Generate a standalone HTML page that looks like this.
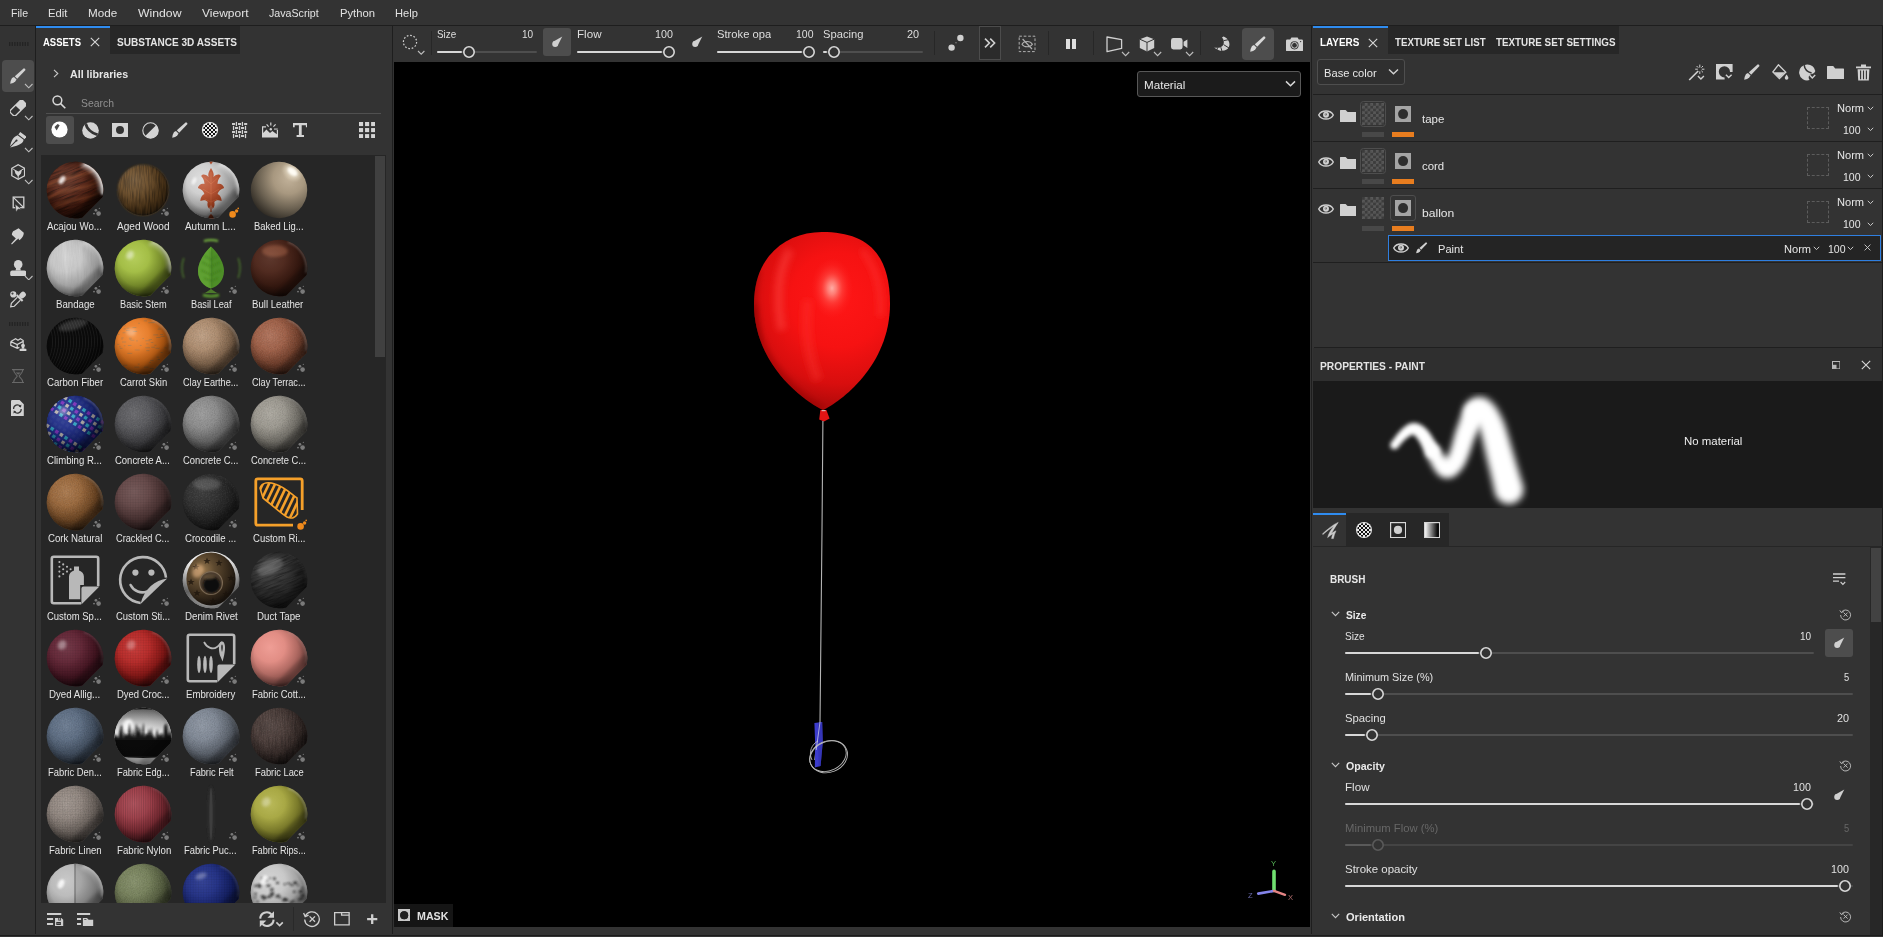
<!DOCTYPE html>
<html><head><meta charset="utf-8"><title>Substance 3D Painter</title>
<style>
html,body{margin:0;padding:0;background:#333;overflow:hidden}
body{width:1883px;height:937px;position:relative;font-family:"Liberation Sans",sans-serif}
.b{position:absolute;display:block}
.t{position:absolute;white-space:pre;transform-origin:0 50%;display:block}
</style></head><body>
<div class="b" style="left:0px;top:0px;width:1883px;height:25px;background:#333333;"></div>
<div class="b" style="left:0px;top:25px;width:1883px;height:1px;background:#1e1e1e;"></div>
<span class="t" style="left:10.50px;top:8.00px;font-size:11px;line-height:11px;color:#e2e2e2;transform:scaleX(0.9651);">File</span>
<span class="t" style="left:48.40px;top:8.00px;font-size:11px;line-height:11px;color:#e2e2e2;transform:scaleX(1.0227);">Edit</span>
<span class="t" style="left:88.30px;top:8.00px;font-size:11px;line-height:11px;color:#e2e2e2;transform:scaleX(1.0606);">Mode</span>
<span class="t" style="left:138.30px;top:8.00px;font-size:11px;line-height:11px;color:#e2e2e2;transform:scaleX(1.1118);">Window</span>
<span class="t" style="left:202.30px;top:8.00px;font-size:11px;line-height:11px;color:#e2e2e2;transform:scaleX(1.0913);">Viewport</span>
<span class="t" style="left:269.20px;top:8.00px;font-size:11px;line-height:11px;color:#e2e2e2;transform:scaleX(0.9674);">JavaScript</span>
<span class="t" style="left:339.50px;top:8.00px;font-size:11px;line-height:11px;color:#e2e2e2;transform:scaleX(1.0210);">Python</span>
<span class="t" style="left:395.30px;top:8.00px;font-size:11px;line-height:11px;color:#e2e2e2;transform:scaleX(1.0122);">Help</span>
<div class="b" style="left:35px;top:26px;width:1.3px;height:908px;background:#1e1e1e;"></div>
<div class="b" style="left:392px;top:26px;width:1.3px;height:908px;background:#1e1e1e;"></div>
<div class="b" style="left:1311px;top:26px;width:1.2px;height:908px;background:#1e1e1e;"></div>
<div class="b" style="left:0px;top:935px;width:1883px;height:1px;background:#1c1c1c;"></div>
<div class="b" style="left:1882px;top:26px;width:1px;height:909px;background:#1c1c1c;"></div>
<svg class="b" style="left:8.5px;top:42.3px;" width="21" height="4" viewBox="0 0 21 4"><rect x="0.0" y="0" width="1.3" height="4" fill="#232323"/><rect x="2.6" y="0" width="1.3" height="4" fill="#232323"/><rect x="5.2" y="0" width="1.3" height="4" fill="#232323"/><rect x="7.8" y="0" width="1.3" height="4" fill="#232323"/><rect x="10.4" y="0" width="1.3" height="4" fill="#232323"/><rect x="13.0" y="0" width="1.3" height="4" fill="#232323"/><rect x="15.6" y="0" width="1.3" height="4" fill="#232323"/><rect x="18.2" y="0" width="1.3" height="4" fill="#232323"/></svg>
<svg class="b" style="left:8.5px;top:322.2px;" width="21" height="4" viewBox="0 0 21 4"><rect x="0.0" y="0" width="1.3" height="4" fill="#232323"/><rect x="2.6" y="0" width="1.3" height="4" fill="#232323"/><rect x="5.2" y="0" width="1.3" height="4" fill="#232323"/><rect x="7.8" y="0" width="1.3" height="4" fill="#232323"/><rect x="10.4" y="0" width="1.3" height="4" fill="#232323"/><rect x="13.0" y="0" width="1.3" height="4" fill="#232323"/><rect x="15.6" y="0" width="1.3" height="4" fill="#232323"/><rect x="18.2" y="0" width="1.3" height="4" fill="#232323"/></svg>
<div class="b" style="left:2px;top:60px;width:32px;height:32px;background:#4d4d4d;border-radius:4px;"></div>
<svg class="b" style="left:10.3px;top:68.3px;overflow:visible;" width="16.0" height="16.0" viewBox="0 0 16 16"><path d="M0.18 15.69 Q3.51 15.39 5.27 13.47 L6.54 11.47 L4.03 8.89 L2.00 10.09 Q0.44 12.79 0.18 15.69 Z" fill="#d2d2d2"/><path d="M7.19 10.70 L15.53 1.92 Q15.34 0.44 13.86 0.20 L4.82 8.26 Z" fill="#d2d2d2"/></svg>
<svg class="b" style="left:24px;top:83.0px;" width="9.5" height="5.8" viewBox="0 0 9.5 5.8"><path d="M1 1 L4.75 4.80 L8.5 1" fill="none" stroke="#bdbdbd" stroke-width="1.1"/></svg>
<svg class="b" style="left:10px;top:100px;" width="16" height="16" viewBox="0 0 16 16"><g transform="rotate(-45 8 8)"><rect x="-0.6" y="4.3" width="17.2" height="7.4" rx="2" fill="none" stroke="#d2d2d2" stroke-width="1.3"/><path d="M8 4.3 H14.6 A2 2 0 0 1 16.6 6.3 V9.7 A2 2 0 0 1 14.6 11.7 H8 Z" fill="#d2d2d2"/></g></svg>
<svg class="b" style="left:24px;top:114.9px;" width="9.5" height="5.8" viewBox="0 0 9.5 5.8"><path d="M1 1 L4.75 4.80 L8.5 1" fill="none" stroke="#bdbdbd" stroke-width="1.1"/></svg>
<svg class="b" style="left:9.8px;top:132px;" width="16.4" height="16.4" viewBox="0 0 16.4 16.4"><g fill="#d2d2d2"><path d="M10.2 0 L16.4 4.6 L14.6 7.2 L8.4 2.4 Z"/><path d="M7.6 3.2 L13.6 7.8 C13 11 11 13 0.2 15.6 L6.2 9.6 A1.1 1.1 0 1 0 5.4 8.8 L0 14.6 C1.4 7.6 3.6 4.8 7.6 3.2 Z"/></g></svg>
<svg class="b" style="left:24px;top:146.8px;" width="9.5" height="5.8" viewBox="0 0 9.5 5.8"><path d="M1 1 L4.75 4.80 L8.5 1" fill="none" stroke="#bdbdbd" stroke-width="1.1"/></svg>
<svg class="b" style="left:11px;top:164px;" width="14.4" height="16" viewBox="0 0 14.4 16"><path d="M7.2 0.7 L13.6 4.3 V11.7 L7.2 15.3 L0.8 11.7 V4.3 Z" fill="none" stroke="#d2d2d2" stroke-width="1.3"/><path d="M7.2 8 L3.4 5.8 L4.4 9.4 L7.2 12.4 L10 9.4 L11 5.8 Z" fill="#d2d2d2"/><path d="M7.2 8 V14.5 M7.2 8 L1.3 4.6 M7.2 8 L13.1 4.6" stroke="#d2d2d2" stroke-width="0.9" fill="none"/></svg>
<svg class="b" style="left:24px;top:178.8px;" width="9.5" height="5.8" viewBox="0 0 9.5 5.8"><path d="M1 1 L4.75 4.80 L8.5 1" fill="none" stroke="#bdbdbd" stroke-width="1.1"/></svg>
<svg class="b" style="left:11.5px;top:195.5px;" width="14" height="17" viewBox="0 0 14 17"><rect x="1.2" y="1.1" width="10.6" height="10.6" fill="none" stroke="#d2d2d2" stroke-width="1.3"/><path d="M1.4 1.3 L11.6 11.5" stroke="#d2d2d2" stroke-width="1.1"/><path d="M3.0 7.9 L9.6 13.2 L6.0 13.3 L4.1 16.3 Z" fill="#d2d2d2" stroke="#333" stroke-width="0.7"/></svg>
<svg class="b" style="left:11px;top:227.5px;" width="14" height="17" viewBox="0 0 14 17"><g fill="#d2d2d2"><path d="M7.6 0.3 L12.8 4.8 C12.8 7 11.6 9.6 9.6 11.2 L8.2 12.2 L7.4 10.6 L6.0 11.4 L1.0 7.0 C0.6 5.2 2.0 2.6 3.6 2.4 Z"/><path d="M5.4 9.8 L6.6 10.9 L0.9 16.6 L0.1 15.8 Z"/></g></svg>
<svg class="b" style="left:9.8px;top:259.6px;" width="16.4" height="16.6" viewBox="0 0 16.4 16.6"><g fill="#d2d2d2"><circle cx="8.2" cy="4.4" r="4.3"/><path d="M6.2 7 H10.2 L10.8 10.6 H5.6 Z"/><rect x="0.2" y="10.4" width="16" height="5.8" rx="2"/></g></svg>
<svg class="b" style="left:24px;top:274.6px;" width="9.5" height="5.8" viewBox="0 0 9.5 5.8"><path d="M1 1 L4.75 4.80 L8.5 1" fill="none" stroke="#bdbdbd" stroke-width="1.1"/></svg>
<svg class="b" style="left:9.8px;top:291.4px;overflow:visible;" width="17" height="17" viewBox="0 0 17 17"><circle cx="3.3" cy="3.4" r="3.1" fill="#d2d2d2"/><circle cx="2.5" cy="2.6" r="1.1" fill="#444"/><g transform="rotate(45 7.8 8.8)"><rect x="5.0" y="-1.4" width="5.6" height="7" rx="2.7" fill="#d2d2d2"/><rect x="3.6" y="5.2" width="8.4" height="2" fill="#d2d2d2"/><path d="M5.7 7.2 V15.8 L7.8 18.8 L9.9 15.8 V7.2" fill="none" stroke="#d2d2d2" stroke-width="1.2"/></g></svg>
<svg class="b" style="left:9.8px;top:338px;" width="17" height="13.4" viewBox="0 0 17 13.4"><g fill="none" stroke="#d2d2d2" stroke-width="1.2"><path d="M0.8 3.6 L5.6 0.8 L8 2.2 L10.4 0.8 L13.2 2.6 V6 M0.8 3.6 V7.4 L7.2 10.4 L9.4 9.4 M0.8 3.6 L7.2 6.6 L13.2 3.4 M7.2 6.6 V10.4"/></g><g fill="#d2d2d2"><circle cx="13" cy="7.6" r="1.9"/><path d="M11.8 9 H14.2 L14.4 10.8 H11.6 Z"/><rect x="9.6" y="10.8" width="6.8" height="2.4" rx="0.6"/></g></svg>
<svg class="b" style="left:11.8px;top:369px;" width="12.4" height="14.2" viewBox="0 0 12.4 14.2"><g fill="none" stroke="#686868" stroke-width="1.1"><path d="M0 0.6 H12.4 M0 13.6 H12.4 M1.6 0.6 C1.6 5 5.2 5.6 5.2 7.1 C5.2 8.6 1.6 9.2 1.6 13.6 M10.8 0.6 C10.8 5 7.2 5.6 7.2 7.1 C7.2 8.6 10.8 9.2 10.8 13.6"/></g><path d="M3.6 3.4 H8.8 L6.2 5.8 Z" fill="#686868"/></svg>
<svg class="b" style="left:10.8px;top:399.6px;" width="12.8" height="16.8" viewBox="0 0 12.8 16.8"><path d="M1.2 0 H8.6 L12.8 4.2 V15.6 A1.2 1.2 0 0 1 11.6 16.8 H1.2 A1.2 1.2 0 0 1 0 15.6 V1.2 A1.2 1.2 0 0 1 1.2 0 Z" fill="#d2d2d2"/><g fill="none" stroke="#333" stroke-width="1.2"><path d="M2.6 9 A3.8 3.8 0 0 1 9.4 6.4"/><path d="M10.2 9 A3.8 3.8 0 0 1 3.4 11.6"/></g><path d="M10.4 4.6 L10 7.6 L7.6 6.4 Z M2.4 13.4 L2.8 10.4 L5.2 11.6 Z" fill="#333"/></svg>
<div class="b" style="left:36px;top:26px;width:74px;height:2px;background:#2f8cf0;"></div>
<div class="b" style="left:110px;top:26px;width:130px;height:28px;background:#272727;"></div>
<span class="t" style="left:43.30px;top:37.00px;font-size:11px;line-height:11px;font-weight:700;color:#ffffff;transform:scaleX(0.8630);">ASSETS</span>
<svg class="b" style="left:90px;top:36.9px;" width="10" height="10" viewBox="0 0 10 10"><path d="M0.8 0.8 L9.2 9.2 M9.2 0.8 L0.8 9.2" stroke="#d8d8d8" stroke-width="1.1" fill="none"/></svg>
<span class="t" style="left:117.10px;top:37.00px;font-size:11px;line-height:11px;font-weight:700;color:#e4e4e4;transform:scaleX(0.9130);">SUBSTANCE 3D ASSETS</span>
<svg class="b" style="left:53px;top:69px;" width="6" height="9" viewBox="0 0 6 9"><path d="M1 0.8 L4.8 4.5 L1 8.2" fill="none" stroke="#c8c8c8" stroke-width="1.1"/></svg>
<span class="t" style="left:70.00px;top:69.00px;font-size:11px;line-height:11px;font-weight:700;color:#e6e6e6;transform:scaleX(0.9705);">All libraries</span>
<svg class="b" style="left:51px;top:94.3px;" width="16" height="16" viewBox="0 0 16 16"><circle cx="6.4" cy="6.3" r="4.4" fill="none" stroke="#d8d8d8" stroke-width="1.5"/><path d="M9.6 9.6 L14.3 14.2" stroke="#d8d8d8" stroke-width="1.6"/></svg>
<span class="t" style="left:80.80px;top:98.00px;font-size:11px;line-height:11px;color:#8f8f8f;transform:scaleX(0.9462);">Search</span>
<div class="b" style="left:46px;top:113px;width:335px;height:1px;background:#505050;"></div>
<div class="b" style="left:46px;top:116px;width:28px;height:28px;background:#4d4d4d;border-radius:3px;"></div>
<svg class="b" style="left:51.2px;top:121.2px;" width="17" height="17" viewBox="0 0 17 17"><circle cx="8.5" cy="8.5" r="8.1" fill="#ffffff"/><path d="M6.6 3.0 L8.7 4.3 L5.6 9.4 L3.5 6.0 Z" fill="#4d4d4d"/></svg>
<svg class="b" style="left:81.5px;top:121.5px;" width="17" height="17" viewBox="0 0 17 17"><defs><clipPath id="smc"><circle cx="8.5" cy="8.5" r="8.3"/></clipPath></defs><circle cx="8.5" cy="8.5" r="8.3" fill="#d4d4d4"/><path d="M3.4 1.0 C4.8 6.6 9 11 15.8 12.8" fill="none" stroke="#333" stroke-width="2.9" clip-path="url(#smc)"/></svg>
<svg class="b" style="left:112px;top:123px;" width="16" height="14.2" viewBox="0 0 16 14.2"><path fill-rule="evenodd" d="M0 0 H16 V14.2 H0 Z M8 3.1 A4 4 0 1 0 8 11.1 A4 4 0 1 0 8 3.1 Z" fill="#d4d4d4"/></svg>
<svg class="b" style="left:141.5px;top:121.5px;" width="17" height="17" viewBox="0 0 17 17"><circle cx="8.5" cy="8.5" r="7.7" fill="none" stroke="#d4d4d4" stroke-width="1.1"/><path d="M14.1 3.2 A7.7 7.7 0 0 1 3.2 14.1 Z" fill="#d4d4d4"/></svg>
<svg class="b" style="left:172.2px;top:122px;overflow:visible;" width="16.0" height="16.0" viewBox="0 0 16 16"><path d="M0.18 15.69 Q3.51 15.39 5.27 13.47 L6.54 11.47 L4.03 8.89 L2.00 10.09 Q0.44 12.79 0.18 15.69 Z" fill="#d4d4d4"/><path d="M7.19 10.70 L15.53 1.92 Q15.34 0.44 13.86 0.20 L4.82 8.26 Z" fill="#d4d4d4"/></svg>
<svg class="b" style="left:201px;top:121px;" width="18" height="18" viewBox="0 0 18 18"><defs><clipPath id="ckc"><circle cx="9" cy="9" r="7.0"/></clipPath></defs><circle cx="9" cy="9" r="8.1" fill="#ececec"/><g clip-path="url(#ckc)"><rect x="-2" y="-2" width="2" height="2" fill="#101010"/><rect x="-2" y="2" width="2" height="2" fill="#101010"/><rect x="-2" y="6" width="2" height="2" fill="#101010"/><rect x="-2" y="10" width="2" height="2" fill="#101010"/><rect x="-2" y="14" width="2" height="2" fill="#101010"/><rect x="-2" y="18" width="2" height="2" fill="#101010"/><rect x="0" y="0" width="2" height="2" fill="#101010"/><rect x="0" y="4" width="2" height="2" fill="#101010"/><rect x="0" y="8" width="2" height="2" fill="#101010"/><rect x="0" y="12" width="2" height="2" fill="#101010"/><rect x="0" y="16" width="2" height="2" fill="#101010"/><rect x="2" y="-2" width="2" height="2" fill="#101010"/><rect x="2" y="2" width="2" height="2" fill="#101010"/><rect x="2" y="6" width="2" height="2" fill="#101010"/><rect x="2" y="10" width="2" height="2" fill="#101010"/><rect x="2" y="14" width="2" height="2" fill="#101010"/><rect x="2" y="18" width="2" height="2" fill="#101010"/><rect x="4" y="0" width="2" height="2" fill="#101010"/><rect x="4" y="4" width="2" height="2" fill="#101010"/><rect x="4" y="8" width="2" height="2" fill="#101010"/><rect x="4" y="12" width="2" height="2" fill="#101010"/><rect x="4" y="16" width="2" height="2" fill="#101010"/><rect x="6" y="-2" width="2" height="2" fill="#101010"/><rect x="6" y="2" width="2" height="2" fill="#101010"/><rect x="6" y="6" width="2" height="2" fill="#101010"/><rect x="6" y="10" width="2" height="2" fill="#101010"/><rect x="6" y="14" width="2" height="2" fill="#101010"/><rect x="6" y="18" width="2" height="2" fill="#101010"/><rect x="8" y="0" width="2" height="2" fill="#101010"/><rect x="8" y="4" width="2" height="2" fill="#101010"/><rect x="8" y="8" width="2" height="2" fill="#101010"/><rect x="8" y="12" width="2" height="2" fill="#101010"/><rect x="8" y="16" width="2" height="2" fill="#101010"/><rect x="10" y="-2" width="2" height="2" fill="#101010"/><rect x="10" y="2" width="2" height="2" fill="#101010"/><rect x="10" y="6" width="2" height="2" fill="#101010"/><rect x="10" y="10" width="2" height="2" fill="#101010"/><rect x="10" y="14" width="2" height="2" fill="#101010"/><rect x="10" y="18" width="2" height="2" fill="#101010"/><rect x="12" y="0" width="2" height="2" fill="#101010"/><rect x="12" y="4" width="2" height="2" fill="#101010"/><rect x="12" y="8" width="2" height="2" fill="#101010"/><rect x="12" y="12" width="2" height="2" fill="#101010"/><rect x="12" y="16" width="2" height="2" fill="#101010"/><rect x="14" y="-2" width="2" height="2" fill="#101010"/><rect x="14" y="2" width="2" height="2" fill="#101010"/><rect x="14" y="6" width="2" height="2" fill="#101010"/><rect x="14" y="10" width="2" height="2" fill="#101010"/><rect x="14" y="14" width="2" height="2" fill="#101010"/><rect x="14" y="18" width="2" height="2" fill="#101010"/><rect x="16" y="0" width="2" height="2" fill="#101010"/><rect x="16" y="4" width="2" height="2" fill="#101010"/><rect x="16" y="8" width="2" height="2" fill="#101010"/><rect x="16" y="12" width="2" height="2" fill="#101010"/><rect x="16" y="16" width="2" height="2" fill="#101010"/><rect x="18" y="-2" width="2" height="2" fill="#101010"/><rect x="18" y="2" width="2" height="2" fill="#101010"/><rect x="18" y="6" width="2" height="2" fill="#101010"/><rect x="18" y="10" width="2" height="2" fill="#101010"/><rect x="18" y="14" width="2" height="2" fill="#101010"/><rect x="18" y="18" width="2" height="2" fill="#101010"/></g></svg>
<svg class="b" style="left:232px;top:121px;" width="16" height="18" viewBox="0 0 16 18"><rect x="0.0" y="2.05" width="3.1" height="1.9" fill="#d4d4d4"/><rect x="6.0" y="2.05" width="3.1" height="1.9" fill="#d4d4d4"/><rect x="12.1" y="2.05" width="3.1" height="1.9" fill="#d4d4d4"/><rect x="3.8" y="0.90" width="1.25" height="4.2" fill="#d4d4d4"/><rect x="9.8" y="0.90" width="1.25" height="4.2" fill="#d4d4d4"/><rect x="3.0" y="6.05" width="3.1" height="1.9" fill="#d4d4d4"/><rect x="9.0" y="6.05" width="3.1" height="1.9" fill="#d4d4d4"/><rect x="0.9" y="4.90" width="1.25" height="4.2" fill="#d4d4d4"/><rect x="6.9" y="4.90" width="1.25" height="4.2" fill="#d4d4d4"/><rect x="12.9" y="4.90" width="1.25" height="4.2" fill="#d4d4d4"/><rect x="0.0" y="10.05" width="3.1" height="1.9" fill="#d4d4d4"/><rect x="6.0" y="10.05" width="3.1" height="1.9" fill="#d4d4d4"/><rect x="12.1" y="10.05" width="3.1" height="1.9" fill="#d4d4d4"/><rect x="3.8" y="8.90" width="1.25" height="4.2" fill="#d4d4d4"/><rect x="9.8" y="8.90" width="1.25" height="4.2" fill="#d4d4d4"/><rect x="3.0" y="14.05" width="3.1" height="1.9" fill="#d4d4d4"/><rect x="9.0" y="14.05" width="3.1" height="1.9" fill="#d4d4d4"/><rect x="0.9" y="12.90" width="1.25" height="4.2" fill="#d4d4d4"/><rect x="6.9" y="12.90" width="1.25" height="4.2" fill="#d4d4d4"/><rect x="12.9" y="12.90" width="1.25" height="4.2" fill="#d4d4d4"/></svg>
<svg class="b" style="left:262px;top:121.5px;" width="16.4" height="16" viewBox="0 0 16.4 16"><path d="M0 4.2 H4 V5.4 H1.2 V11 L4.4 7.6 L8 11 L10.4 9 L14.8 12.2 V8 H16 V15.4 H0 Z" fill="#d4d4d4"/><circle cx="8.8" cy="7.2" r="1.2" fill="#d4d4d4"/><path d="M8.8 0.4 V3.6 M4.6 2.4 L6.6 4.6 M13.6 2.4 L11.4 4.6" stroke="#d4d4d4" stroke-width="1.2"/><rect x="12" y="6.3" width="3.8" height="1.6" fill="#9a9a9a"/></svg>
<svg class="b" style="left:292.7px;top:122.8px;" width="14.6" height="14.4" viewBox="0 0 14.6 14.4"><path d="M0 0 H14.6 V4.2 H12.9 V2.3 H8.7 V12.1 H11 V14.2 H3.6 V12.1 H5.9 V2.3 H1.7 V4.2 H0 Z" fill="#d4d4d4"/></svg>
<svg class="b" style="left:359px;top:122px;" width="16.2" height="16.2" viewBox="0 0 16.2 16.2"><rect x="0.00" y="0.00" width="4.1" height="4.1" fill="#d4d4d4"/><rect x="0.00" y="6.05" width="4.1" height="4.1" fill="#d4d4d4"/><rect x="0.00" y="12.10" width="4.1" height="4.1" fill="#d4d4d4"/><rect x="6.05" y="0.00" width="4.1" height="4.1" fill="#d4d4d4"/><rect x="6.05" y="6.05" width="4.1" height="4.1" fill="#d4d4d4"/><rect x="6.05" y="12.10" width="4.1" height="4.1" fill="#d4d4d4"/><rect x="12.10" y="0.00" width="4.1" height="4.1" fill="#d4d4d4"/><rect x="12.10" y="6.05" width="4.1" height="4.1" fill="#d4d4d4"/><rect x="12.10" y="12.10" width="4.1" height="4.1" fill="#d4d4d4"/></svg>
<div class="b" style="left:41px;top:155px;width:345px;height:748px;background:#262626;"></div>
<div class="b" style="left:375px;top:156px;width:10px;height:201px;background:#404040;"></div>
<svg class="b" style="left:41px;top:155px;" width="334" height="748" viewBox="0 0 334 748"><defs>
<clipPath id="sc"><path d="M27.4 7.1 A28.3 28.3 0 1 0 7.1 27.4 Z"/></clipPath>
<radialGradient id="shd" cx="-9" cy="-11" r="47" gradientUnits="userSpaceOnUse"><stop offset="0" stop-color="#000" stop-opacity="0"/><stop offset="0.32" stop-color="#000" stop-opacity="0.06"/><stop offset="0.58" stop-color="#000" stop-opacity="0.30"/><stop offset="0.8" stop-color="#000" stop-opacity="0.58"/><stop offset="1" stop-color="#000" stop-opacity="0.86"/></radialGradient>
<radialGradient id="hl" cx="-11" cy="-12" r="11" gradientUnits="userSpaceOnUse"><stop offset="0" stop-color="#fff" stop-opacity="1"/><stop offset="0.35" stop-color="#fff" stop-opacity="0.55"/><stop offset="1" stop-color="#fff" stop-opacity="0"/></radialGradient>
<radialGradient id="dif" cx="-9" cy="-10" r="30" gradientUnits="userSpaceOnUse"><stop offset="0" stop-color="#fff" stop-opacity="0.28"/><stop offset="1" stop-color="#fff" stop-opacity="0"/></radialGradient>
<radialGradient id="edg" cx="-2" cy="-4" r="31.5" gradientUnits="userSpaceOnUse"><stop offset="0" stop-color="#000" stop-opacity="0"/><stop offset="0.72" stop-color="#000" stop-opacity="0"/><stop offset="0.92" stop-color="#000" stop-opacity="0.22"/><stop offset="1" stop-color="#000" stop-opacity="0.5"/></radialGradient>
<linearGradient id="feg" x1="0" y1="-28" x2="0" y2="2" gradientUnits="userSpaceOnUse"><stop offset="0" stop-color="#5a5a5a"/><stop offset="0.45" stop-color="#b8b8b8"/><stop offset="0.8" stop-color="#f2f2f2"/><stop offset="1" stop-color="#d0d0d0"/></linearGradient>
<linearGradient id="cutg" x1="0" y1="0" x2="1" y2="1"><stop offset="0" stop-color="#000" stop-opacity="0"/><stop offset="1" stop-color="#000" stop-opacity="0.5"/></linearGradient>
<filter id="bl1" x="-20%" y="-20%" width="140%" height="140%"><feGaussianBlur stdDeviation="0.8"/></filter>
<filter id="bl2" x="-20%" y="-20%" width="140%" height="140%"><feGaussianBlur stdDeviation="1.6"/></filter>
<filter id="nz" x="0" y="0" width="100%" height="100%"><feTurbulence type="fractalNoise" baseFrequency="0.85" numOctaves="2" seed="4"/><feColorMatrix type="matrix" values="0 0 0 0 0  0 0 0 0 0  0 0 0 0 0  1.6 0 0 0 -0.62"/></filter>
<filter id="nzw" x="0" y="0" width="100%" height="100%"><feTurbulence type="fractalNoise" baseFrequency="0.7" numOctaves="2" seed="9"/><feColorMatrix type="matrix" values="0 0 0 0 1  0 0 0 0 1  0 0 0 0 1  0 1.6 0 0 -0.66"/></filter>
<filter id="nzv" x="0" y="0" width="100%" height="100%"><feTurbulence type="fractalNoise" baseFrequency="0.9 0.07" numOctaves="2" seed="2"/><feColorMatrix type="matrix" values="0 0 0 0 0  0 0 0 0 0  0 0 0 0 0  2.2 0 0 0 -0.85"/></filter>
<filter id="nzh" x="0" y="0" width="100%" height="100%"><feTurbulence type="fractalNoise" baseFrequency="0.06 0.8" numOctaves="2" seed="6"/><feColorMatrix type="matrix" values="0 0 0 0 0  0 0 0 0 0  0 0 0 0 0  2.2 0 0 0 -0.85"/></filter>
<g id="dots"><circle cx="23.6" cy="23.6" r="2.3"/><circle cx="20.9" cy="20.3" r="1.35"/><circle cx="19" cy="23.6" r="0.95"/><circle cx="24.3" cy="18.4" r="0.55"/></g>
<pattern id="pgrid" width="2.6" height="2.6" patternUnits="userSpaceOnUse"><path d="M0 0 H2.6 M0 0 V2.6" stroke="#000" stroke-opacity="0.35" stroke-width="0.7"/></pattern>
<pattern id="pnoise" width="3" height="3" patternUnits="userSpaceOnUse"><rect x="0" y="0" width="1.2" height="1.2" fill="#000" fill-opacity="0.16"/><rect x="1.6" y="1.7" width="1.1" height="1.1" fill="#fff" fill-opacity="0.10"/></pattern>
<pattern id="pweave" width="2" height="2" patternUnits="userSpaceOnUse"><rect x="0" y="0" width="1" height="1" fill="#000" fill-opacity="0.22"/><rect x="1" y="1" width="1" height="1" fill="#fff" fill-opacity="0.10"/></pattern>
<pattern id="pvert" width="1.8" height="8" patternUnits="userSpaceOnUse"><rect x="0" y="0" width="0.8" height="8" fill="#000" fill-opacity="0.22"/></pattern>
</defs><g transform="translate(34,35)"><g clip-path="url(#sc)"><circle r="29" fill="#5a2212"/><g transform="rotate(-22)"><rect x="-34" y="-34" width="68" height="68" filter="url(#nzh)" opacity="0.6"/></g><path d="M30 -6 L-6 30 H30 Z" fill="#000" opacity="0.35" filter="url(#bl2)"/><g transform="rotate(-18)"><path d="M-30 -12 C-10 -18 8 -8 30 -14 M-30 0 C-8 -8 8 6 30 -2 M-30 12 C-10 4 10 16 30 8" stroke="#9a4a2a" stroke-opacity="0.55" stroke-width="3" fill="none" filter="url(#bl1)"/></g><ellipse cx="-13" cy="-10" rx="2.6" ry="4.6" fill="#fff" opacity="0.85" filter="url(#bl1)" transform="rotate(35 -13 -10)"/><circle r="29" fill="url(#dif)" opacity="0.5"/><circle r="29" fill="url(#shd)" opacity="0.9"/><circle r="29" fill="url(#edg)" opacity="0.8"/><path d="M9 -26.2 A27.6 27.6 0 0 1 27.2 4.6" fill="none" stroke="#fff" stroke-opacity="0.9" stroke-width="2.64" filter="url(#bl1)"/><path d="M6 -25 A26 26 0 0 1 26 2" fill="none" stroke="#fff" stroke-opacity="0.38" stroke-width="5" filter="url(#bl2)"/><path d="M30 2 L2 30 L-4 26 L26 -4 Z" fill="#000" opacity="0.18" filter="url(#bl2)"/></g><use href="#dots" fill="#7a7a7a"/></g><g transform="translate(102,35)"><defs><clipPath id="agc"><circle r="25.4"/></clipPath></defs><circle r="25.2" fill="#6a4a22" filter="url(#bl1)"/><g clip-path="url(#agc)"><rect x="-30" y="-30" width="60" height="60" filter="url(#nzv)" opacity="0.42"/><circle r="27" fill="url(#dif)" opacity="0.55"/><circle r="27" fill="url(#shd)" opacity="0.95"/></g><use href="#dots" fill="#7a7a7a"/></g><g transform="translate(170,35)"><g clip-path="url(#sc)"><circle r="29" fill="#d4d4d4"/><g transform="scale(0.82 1.0)"><path d="M0 -22 C3 -18 4 -16 3 -13 C7 -16 10 -16 12 -14 C9 -11 8 -9 8 -6 C12 -7 15 -5 16 -2 C12 -1 9 1 8 4 C11 5 13 8 13 11 C9 10 6 10 4 12 C5 15 4 17 2 19 L0.8 15 L0.7 22 L-0.7 22 L-0.8 15 L-2 19 C-4 17 -5 15 -4 12 C-6 10 -9 10 -13 11 C-13 8 -11 5 -8 4 C-9 1 -12 -1 -16 -2 C-15 -5 -12 -7 -8 -6 C-8 -9 -9 -11 -12 -14 C-10 -16 -7 -16 -3 -13 C-4 -16 -3 -18 0 -22 Z" fill="#b8441e"/><path d="M0 -18 V18 M0 -6 L-8 -12 M0 -6 L8 -12 M0 4 L-10 -1 M0 4 L10 -1 M0 12 L-8 9 M0 12 L8 9" stroke="#d8683a" stroke-width="0.6" fill="none"/></g><path d="M-3 -30 L0 -25.4 L3 -30 Z M-3.4 30 L-2 26 L0 24 L2 26 L3.4 30 Z" fill="#b8441e"/><ellipse cx="-17" cy="-9" rx="1.8" ry="4" fill="#fff" opacity="0.9" filter="url(#bl1)" transform="rotate(25 -17 -9)"/><circle r="29" fill="url(#dif)" opacity="0.9"/><circle r="29" fill="url(#shd)" opacity="0.8"/><circle r="29" fill="url(#edg)" opacity="0.8"/><path d="M9 -26.2 A27.6 27.6 0 0 1 27.2 4.6" fill="none" stroke="#fff" stroke-opacity="0.7" stroke-width="2.32" filter="url(#bl1)"/><path d="M6 -25 A26 26 0 0 1 26 2" fill="none" stroke="#fff" stroke-opacity="0.29" stroke-width="5" filter="url(#bl2)"/><path d="M30 2 L2 30 L-4 26 L26 -4 Z" fill="#000" opacity="0.18" filter="url(#bl2)"/></g><circle cx="21.6" cy="24.4" r="3.3" fill="#f08a1c"/><circle cx="25.6" cy="21" r="1.7" fill="#f08a1c"/><circle cx="27.2" cy="18.4" r="0.8" fill="#f08a1c"/></g><g transform="translate(238,35)"><defs><clipPath id="bkc"><circle r="28.2"/></clipPath><radialGradient id="bkg" cx="10" cy="-12" r="45" gradientUnits="userSpaceOnUse"><stop offset="0" stop-color="#c2b29a"/><stop offset="0.35" stop-color="#a89880"/><stop offset="0.68" stop-color="#6c6252"/><stop offset="1" stop-color="#2a2620"/></radialGradient></defs><circle r="28.2" fill="url(#bkg)"/><g clip-path="url(#bkc)"><ellipse cx="13.4" cy="-18.4" rx="6" ry="3.6" fill="#fff" filter="url(#bl1)" transform="rotate(38 13.4 -18.4)"/><ellipse cx="13" cy="-18" rx="10" ry="7" fill="#fff6e0" opacity="0.35" filter="url(#bl2)" transform="rotate(38 13 -18)"/></g></g><g transform="translate(34,113)"><g clip-path="url(#sc)"><circle r="29" fill="#cacaca"/><rect x="-30" y="-30" width="60" height="60" filter="url(#nzv)" opacity="0.035"/><path d="M-12 -28 C-8 -10 -10 10 -6 28 M4 -28 C8 -8 4 8 8 28" stroke="#fff" stroke-opacity="0.25" stroke-width="1.4" fill="none" filter="url(#bl1)"/><circle r="29" fill="url(#dif)" opacity="0.55"/><circle r="29" fill="url(#shd)" opacity="0.62"/><circle r="29" fill="url(#edg)" opacity="0.8"/><path d="M9 -26.2 A27.6 27.6 0 0 1 27.2 4.6" fill="none" stroke="#fff" stroke-opacity="0.5" stroke-width="2.00" filter="url(#bl1)"/><path d="M6 -25 A26 26 0 0 1 26 2" fill="none" stroke="#fff" stroke-opacity="0.21" stroke-width="5" filter="url(#bl2)"/><path d="M30 2 L2 30 L-4 26 L26 -4 Z" fill="#000" opacity="0.18" filter="url(#bl2)"/></g><use href="#dots" fill="#7a7a7a"/></g><g transform="translate(102,113)"><g clip-path="url(#sc)"><circle r="29" fill="#a6c43a"/><ellipse cx="-13" cy="-13" rx="3.4" ry="4.6" fill="#fff" opacity="0.5" filter="url(#bl2)" transform="rotate(30 -13 -13)"/><circle r="29" fill="url(#dif)" opacity="0.6"/><circle r="29" fill="url(#shd)" opacity="0.95"/><circle r="29" fill="url(#edg)" opacity="0.8"/><path d="M9 -26.2 A27.6 27.6 0 0 1 27.2 4.6" fill="none" stroke="#fff" stroke-opacity="0.55" stroke-width="2.08" filter="url(#bl1)"/><path d="M6 -25 A26 26 0 0 1 26 2" fill="none" stroke="#fff" stroke-opacity="0.23" stroke-width="5" filter="url(#bl2)"/><path d="M30 2 L2 30 L-4 26 L26 -4 Z" fill="#000" opacity="0.18" filter="url(#bl2)"/></g><use href="#dots" fill="#7a7a7a"/></g><g transform="translate(170,113)"><g fill="none" stroke="#5c9c2e" filter="url(#bl1)"><path d="M-7 -27 A28 28 0 0 1 7 -27" stroke-width="2" stroke="#78b840"/><path d="M-8 27 A28 28 0 0 0 8 27" stroke-width="2.4"/><path d="M-27.2 -10 A29 29 0 0 0 -27.2 10" stroke-width="1.1" opacity="0.8"/><path d="M27.2 -10 A29 29 0 0 1 27.2 10" stroke-width="1.1" opacity="0.8"/></g><path d="M0 -21.6 C6 -16 13 -6 13 3 C13 12 7 18.6 0 20.4 C-7 18.6 -13 12 -13 3 C-13 -6 -6 -16 0 -21.6 Z" fill="#4e8e28"/><path d="M0 -21.6 C-6 -16 -13 -6 -13 3 C-13 12 -7 18.6 0 20.4 Z" fill="#66a836" opacity="0.7"/><path d="M0 -17 V19 M0 -8 L-6 -12 M0 -8 L6 -12 M0 -1 L-9 -6 M0 -1 L9 -6 M0 7 L-10 2 M0 7 L10 2 M0 13 L-7 10 M0 13 L7 10" stroke="#356e1a" stroke-width="0.8" fill="none" filter="url(#bl1)"/><path d="M-6 25 L0 21 L6 25 Z" fill="#5c9c2e" opacity="0.7"/><use href="#dots" fill="#7a7a7a"/></g><g transform="translate(238,113)"><g clip-path="url(#sc)"><circle r="29" fill="#4c2216"/><ellipse cx="-4" cy="-17" rx="13" ry="6" fill="#b86a4a" opacity="0.45" filter="url(#bl2)"/><circle r="29" fill="url(#dif)" opacity="0.35"/><circle r="29" fill="url(#shd)" opacity="0.95"/><circle r="29" fill="url(#edg)" opacity="0.8"/><path d="M9 -26.2 A27.6 27.6 0 0 1 27.2 4.6" fill="none" stroke="#fff" stroke-opacity="0.3" stroke-width="1.68" filter="url(#bl1)"/><path d="M30 2 L2 30 L-4 26 L26 -4 Z" fill="#000" opacity="0.18" filter="url(#bl2)"/></g><use href="#dots" fill="#7a7a7a"/></g><g transform="translate(34,191)"><g clip-path="url(#sc)"><circle r="29" fill="#0a0a0a"/><g stroke="#fff" stroke-opacity="0.09" stroke-width="0.8" fill="none"><path d="M-30.0 -30 C-20.0 -12 -18.0 6 -36.0 30"/><path d="M-27.0 -30 C-17.0 -12 -15.0 6 -33.0 30"/><path d="M-24.0 -30 C-14.0 -12 -12.0 6 -30.0 30"/><path d="M-21.0 -30 C-11.0 -12 -9.0 6 -27.0 30"/><path d="M-18.0 -30 C-8.0 -12 -6.0 6 -24.0 30"/><path d="M-15.0 -30 C-5.0 -12 -3.0 6 -21.0 30"/><path d="M-12.0 -30 C-2.0 -12 0.0 6 -18.0 30"/><path d="M-9.0 -30 C1.0 -12 3.0 6 -15.0 30"/><path d="M-6.0 -30 C4.0 -12 6.0 6 -12.0 30"/><path d="M-3.0 -30 C7.0 -12 9.0 6 -9.0 30"/><path d="M0.0 -30 C10.0 -12 12.0 6 -6.0 30"/><path d="M3.0 -30 C13.0 -12 15.0 6 -3.0 30"/><path d="M6.0 -30 C16.0 -12 18.0 6 0.0 30"/><path d="M9.0 -30 C19.0 -12 21.0 6 3.0 30"/><path d="M12.0 -30 C22.0 -12 24.0 6 6.0 30"/><path d="M15.0 -30 C25.0 -12 27.0 6 9.0 30"/><path d="M18.0 -30 C28.0 -12 30.0 6 12.0 30"/><path d="M21.0 -30 C31.0 -12 33.0 6 15.0 30"/><path d="M24.0 -30 C34.0 -12 36.0 6 18.0 30"/><path d="M27.0 -30 C37.0 -12 39.0 6 21.0 30"/><path d="M30.0 -30 C40.0 -12 42.0 6 24.0 30"/><path d="M33.0 -30 C43.0 -12 45.0 6 27.0 30"/><path d="M36.0 -30 C46.0 -12 48.0 6 30.0 30"/><path d="M39.0 -30 C49.0 -12 51.0 6 33.0 30"/><path d="M42.0 -30 C52.0 -12 54.0 6 36.0 30"/><path d="M45.0 -30 C55.0 -12 57.0 6 39.0 30"/></g><ellipse cx="-2" cy="-21" rx="15" ry="5" fill="#fff" opacity="0.16" filter="url(#bl2)" transform="rotate(-15 -2 -21)"/><circle r="29" fill="url(#dif)" opacity="0.0"/><circle r="29" fill="url(#shd)" opacity="0.2"/><circle r="29" fill="url(#edg)" opacity="0.8"/><path d="M30 2 L2 30 L-4 26 L26 -4 Z" fill="#000" opacity="0.18" filter="url(#bl2)"/></g><use href="#dots" fill="#7a7a7a"/></g><g transform="translate(102,191)"><g clip-path="url(#sc)"><circle r="29" fill="#f27818"/><g fill="#8a7250" opacity="0.6"><rect x="-10.5" y="-18.9" width="3.8" height="0.8"/><rect x="-23.3" y="1.9" width="2.8" height="0.8"/><rect x="-24.0" y="0.4" width="1.6" height="0.8"/><rect x="-4.9" y="-23.2" width="1.8" height="0.8"/><rect x="-5.3" y="17.7" width="1.9" height="0.8"/><rect x="-15.6" y="6.9" width="4.8" height="0.8"/><rect x="2.4" y="-5.6" width="4.9" height="0.8"/><rect x="-24.6" y="19.4" width="2.5" height="0.8"/><rect x="-19.6" y="-20.6" width="2.6" height="0.8"/><rect x="14.6" y="-17.2" width="3.5" height="0.8"/><rect x="5.6" y="-6.9" width="3.4" height="0.8"/><rect x="-23.8" y="-23.8" width="2.2" height="0.8"/><rect x="7.7" y="-3.9" width="2.6" height="0.8"/><rect x="2.9" y="-2.5" width="2.5" height="0.8"/><rect x="13.5" y="10.7" width="2.4" height="0.8"/><rect x="2.3" y="1.4" width="4.6" height="0.8"/><rect x="10.2" y="-11.5" width="4.9" height="0.8"/><rect x="-21.0" y="-4.4" width="4.1" height="0.8"/><rect x="-19.2" y="-0.6" width="1.6" height="0.8"/><rect x="7.1" y="14.3" width="3.5" height="0.8"/><rect x="17.6" y="-10.1" width="3.9" height="0.8"/><rect x="3.3" y="4.3" width="3.1" height="0.8"/><rect x="15.8" y="24.0" width="3.2" height="0.8"/><rect x="6.9" y="-23.7" width="4.0" height="0.8"/><rect x="6.0" y="26.6" width="4.4" height="0.8"/><rect x="-12.5" y="-6.2" width="3.8" height="0.8"/><rect x="-25.8" y="-2.1" width="2.1" height="0.8"/><rect x="-21.0" y="-23.8" width="4.2" height="0.8"/><rect x="-20.4" y="-13.6" width="2.9" height="0.8"/><rect x="17.4" y="-22.6" width="3.1" height="0.8"/><rect x="1.0" y="20.7" width="4.4" height="0.8"/><rect x="17.1" y="-12.0" width="3.0" height="0.8"/><rect x="-8.7" y="20.7" width="4.9" height="0.8"/><rect x="-19.3" y="-17.5" width="2.3" height="0.8"/><rect x="-15.1" y="-0.8" width="3.6" height="0.8"/><rect x="-13.6" y="-26.8" width="3.0" height="0.8"/><rect x="-8.2" y="3.6" width="4.8" height="0.8"/><rect x="8.2" y="0.8" width="3.7" height="0.8"/><rect x="7.5" y="-24.1" width="4.6" height="0.8"/><rect x="12.8" y="20.2" width="4.3" height="0.8"/><rect x="-7.0" y="-5.5" width="1.9" height="0.8"/><rect x="5.3" y="-23.6" width="1.7" height="0.8"/><rect x="-16.4" y="-18.2" width="2.7" height="0.8"/><rect x="-24.3" y="-27.0" width="2.0" height="0.8"/><rect x="-21.8" y="-7.4" width="1.6" height="0.8"/><rect x="17.6" y="6.2" width="2.0" height="0.8"/><rect x="-14.1" y="-8.2" width="2.8" height="0.8"/><rect x="-20.7" y="18.8" width="5.0" height="0.8"/><rect x="-3.2" y="-0.9" width="1.8" height="0.8"/><rect x="-21.8" y="-8.5" width="2.4" height="0.8"/><rect x="15.3" y="-18.3" width="1.6" height="0.8"/><rect x="21.5" y="1.5" width="2.0" height="0.8"/><rect x="0.7" y="-25.5" width="3.3" height="0.8"/><rect x="22.9" y="19.6" width="3.9" height="0.8"/><rect x="-13.7" y="-7.2" width="2.1" height="0.8"/><rect x="12.4" y="1.8" width="4.2" height="0.8"/><rect x="-10.2" y="-15.0" width="4.3" height="0.8"/><rect x="23.2" y="19.0" width="4.3" height="0.8"/><rect x="14.7" y="13.0" width="2.3" height="0.8"/><rect x="-0.6" y="-7.8" width="1.6" height="0.8"/><rect x="-25.6" y="-11.9" width="2.4" height="0.8"/><rect x="8.3" y="24.7" width="3.1" height="0.8"/><rect x="20.8" y="26.4" width="4.8" height="0.8"/><rect x="-8.4" y="-15.1" width="2.3" height="0.8"/><rect x="-17.0" y="-16.0" width="3.7" height="0.8"/><rect x="18.9" y="18.4" width="3.2" height="0.8"/><rect x="6.3" y="16.2" width="1.8" height="0.8"/><rect x="6.7" y="22.1" width="4.2" height="0.8"/><rect x="11.3" y="-1.2" width="2.1" height="0.8"/><rect x="13.2" y="-9.0" width="4.3" height="0.8"/></g><ellipse cx="-12" cy="-14" rx="5" ry="4" fill="#fff" opacity="0.3" filter="url(#bl2)" transform="rotate(0 -12 -14)"/><circle r="29" fill="url(#dif)" opacity="0.75"/><circle r="29" fill="url(#shd)" opacity="0.88"/><circle r="29" fill="url(#edg)" opacity="0.8"/><path d="M9 -26.2 A27.6 27.6 0 0 1 27.2 4.6" fill="none" stroke="#fff" stroke-opacity="0.35" stroke-width="1.76" filter="url(#bl1)"/><path d="M30 2 L2 30 L-4 26 L26 -4 Z" fill="#000" opacity="0.18" filter="url(#bl2)"/></g><use href="#dots" fill="#7a7a7a"/></g><g transform="translate(170,191)"><g clip-path="url(#sc)"><circle r="29" fill="#b08a68"/><rect x="-30" y="-30" width="60" height="60" filter="url(#nz)" opacity="0.16"/><rect x="-30" y="-30" width="60" height="60" filter="url(#nzw)" opacity="0.10"/><circle r="29" fill="url(#dif)" opacity="0.7"/><circle r="29" fill="url(#shd)" opacity="0.92"/><circle r="29" fill="url(#edg)" opacity="0.8"/><path d="M9 -26.2 A27.6 27.6 0 0 1 27.2 4.6" fill="none" stroke="#fff" stroke-opacity="0.3" stroke-width="1.68" filter="url(#bl1)"/><path d="M30 2 L2 30 L-4 26 L26 -4 Z" fill="#000" opacity="0.18" filter="url(#bl2)"/></g><use href="#dots" fill="#7a7a7a"/></g><g transform="translate(238,191)"><g clip-path="url(#sc)"><circle r="29" fill="#a25a3e"/><rect x="-30" y="-30" width="60" height="60" filter="url(#nz)" opacity="0.16"/><rect x="-30" y="-30" width="60" height="60" filter="url(#nzw)" opacity="0.10"/><circle r="29" fill="url(#dif)" opacity="0.6"/><circle r="29" fill="url(#shd)" opacity="0.95"/><circle r="29" fill="url(#edg)" opacity="0.8"/><path d="M9 -26.2 A27.6 27.6 0 0 1 27.2 4.6" fill="none" stroke="#fff" stroke-opacity="0.3" stroke-width="1.68" filter="url(#bl1)"/><path d="M30 2 L2 30 L-4 26 L26 -4 Z" fill="#000" opacity="0.18" filter="url(#bl2)"/></g><use href="#dots" fill="#7a7a7a"/></g><g transform="translate(34,269)"><g clip-path="url(#sc)"><circle r="29" fill="#1a2a8a"/><g transform="rotate(-12)"><rect x="-32.90" y="-32.90" width="3.4" height="3.4" fill="#8e30c8" transform="rotate(45 -31.2 -31.2)"/><rect x="-32.90" y="-25.10" width="3.4" height="3.4" fill="#24348e" transform="rotate(45 -31.2 -23.4)"/><rect x="-32.90" y="-17.30" width="3.4" height="3.4" fill="#24348e" transform="rotate(45 -31.2 -15.6)"/><rect x="-32.90" y="-9.50" width="3.4" height="3.4" fill="#8e30c8" transform="rotate(45 -31.2 -7.8)"/><rect x="-32.90" y="-1.70" width="3.4" height="3.4" fill="#8e30c8" transform="rotate(45 -31.2 0.0)"/><rect x="-32.90" y="6.10" width="3.4" height="3.4" fill="#8e30c8" transform="rotate(45 -31.2 7.8)"/><rect x="-32.90" y="13.90" width="3.4" height="3.4" fill="#8e30c8" transform="rotate(45 -31.2 15.6)"/><rect x="-32.90" y="21.70" width="3.4" height="3.4" fill="#24348e" transform="rotate(45 -31.2 23.4)"/><rect x="-32.90" y="29.50" width="3.4" height="3.4" fill="#24348e" transform="rotate(45 -31.2 31.2)"/><rect x="-29.00" y="-29.00" width="3.4" height="3.4" fill="#d8ceb8" transform="rotate(45 -27.3 -27.3)"/><rect x="-29.00" y="-21.20" width="3.4" height="3.4" fill="#24348e" transform="rotate(45 -27.3 -19.5)"/><rect x="-29.00" y="-13.40" width="3.4" height="3.4" fill="#24348e" transform="rotate(45 -27.3 -11.7)"/><rect x="-29.00" y="-5.60" width="3.4" height="3.4" fill="#d8ceb8" transform="rotate(45 -27.3 -3.9)"/><rect x="-29.00" y="2.20" width="3.4" height="3.4" fill="#d8ceb8" transform="rotate(45 -27.3 3.9)"/><rect x="-29.00" y="10.00" width="3.4" height="3.4" fill="#d8ceb8" transform="rotate(45 -27.3 11.7)"/><rect x="-29.00" y="17.80" width="3.4" height="3.4" fill="#d8ceb8" transform="rotate(45 -27.3 19.5)"/><rect x="-29.00" y="25.60" width="3.4" height="3.4" fill="#24348e" transform="rotate(45 -27.3 27.3)"/><rect x="-25.10" y="-32.90" width="3.4" height="3.4" fill="#30bcd0" transform="rotate(45 -23.4 -31.2)"/><rect x="-25.10" y="-25.10" width="3.4" height="3.4" fill="#30bcd0" transform="rotate(45 -23.4 -23.4)"/><rect x="-25.10" y="-17.30" width="3.4" height="3.4" fill="#24348e" transform="rotate(45 -23.4 -15.6)"/><rect x="-25.10" y="-9.50" width="3.4" height="3.4" fill="#24348e" transform="rotate(45 -23.4 -7.8)"/><rect x="-25.10" y="-1.70" width="3.4" height="3.4" fill="#30bcd0" transform="rotate(45 -23.4 0.0)"/><rect x="-25.10" y="6.10" width="3.4" height="3.4" fill="#30bcd0" transform="rotate(45 -23.4 7.8)"/><rect x="-25.10" y="13.90" width="3.4" height="3.4" fill="#30bcd0" transform="rotate(45 -23.4 15.6)"/><rect x="-25.10" y="21.70" width="3.4" height="3.4" fill="#30bcd0" transform="rotate(45 -23.4 23.4)"/><rect x="-25.10" y="29.50" width="3.4" height="3.4" fill="#24348e" transform="rotate(45 -23.4 31.2)"/><rect x="-21.20" y="-29.00" width="3.4" height="3.4" fill="#8e30c8" transform="rotate(45 -19.5 -27.3)"/><rect x="-21.20" y="-21.20" width="3.4" height="3.4" fill="#8e30c8" transform="rotate(45 -19.5 -19.5)"/><rect x="-21.20" y="-13.40" width="3.4" height="3.4" fill="#24348e" transform="rotate(45 -19.5 -11.7)"/><rect x="-21.20" y="-5.60" width="3.4" height="3.4" fill="#24348e" transform="rotate(45 -19.5 -3.9)"/><rect x="-21.20" y="2.20" width="3.4" height="3.4" fill="#8e30c8" transform="rotate(45 -19.5 3.9)"/><rect x="-21.20" y="10.00" width="3.4" height="3.4" fill="#8e30c8" transform="rotate(45 -19.5 11.7)"/><rect x="-21.20" y="17.80" width="3.4" height="3.4" fill="#8e30c8" transform="rotate(45 -19.5 19.5)"/><rect x="-21.20" y="25.60" width="3.4" height="3.4" fill="#8e30c8" transform="rotate(45 -19.5 27.3)"/><rect x="-17.30" y="-32.90" width="3.4" height="3.4" fill="#d8ceb8" transform="rotate(45 -15.6 -31.2)"/><rect x="-17.30" y="-25.10" width="3.4" height="3.4" fill="#d8ceb8" transform="rotate(45 -15.6 -23.4)"/><rect x="-17.30" y="-17.30" width="3.4" height="3.4" fill="#d8ceb8" transform="rotate(45 -15.6 -15.6)"/><rect x="-17.30" y="-9.50" width="3.4" height="3.4" fill="#24348e" transform="rotate(45 -15.6 -7.8)"/><rect x="-17.30" y="-1.70" width="3.4" height="3.4" fill="#24348e" transform="rotate(45 -15.6 0.0)"/><rect x="-17.30" y="6.10" width="3.4" height="3.4" fill="#d8ceb8" transform="rotate(45 -15.6 7.8)"/><rect x="-17.30" y="13.90" width="3.4" height="3.4" fill="#d8ceb8" transform="rotate(45 -15.6 15.6)"/><rect x="-17.30" y="21.70" width="3.4" height="3.4" fill="#d8ceb8" transform="rotate(45 -15.6 23.4)"/><rect x="-17.30" y="29.50" width="3.4" height="3.4" fill="#d8ceb8" transform="rotate(45 -15.6 31.2)"/><rect x="-13.40" y="-29.00" width="3.4" height="3.4" fill="#30bcd0" transform="rotate(45 -11.7 -27.3)"/><rect x="-13.40" y="-21.20" width="3.4" height="3.4" fill="#30bcd0" transform="rotate(45 -11.7 -19.5)"/><rect x="-13.40" y="-13.40" width="3.4" height="3.4" fill="#30bcd0" transform="rotate(45 -11.7 -11.7)"/><rect x="-13.40" y="-5.60" width="3.4" height="3.4" fill="#24348e" transform="rotate(45 -11.7 -3.9)"/><rect x="-13.40" y="2.20" width="3.4" height="3.4" fill="#24348e" transform="rotate(45 -11.7 3.9)"/><rect x="-13.40" y="10.00" width="3.4" height="3.4" fill="#30bcd0" transform="rotate(45 -11.7 11.7)"/><rect x="-13.40" y="17.80" width="3.4" height="3.4" fill="#30bcd0" transform="rotate(45 -11.7 19.5)"/><rect x="-13.40" y="25.60" width="3.4" height="3.4" fill="#30bcd0" transform="rotate(45 -11.7 27.3)"/><rect x="-9.50" y="-32.90" width="3.4" height="3.4" fill="#8e30c8" transform="rotate(45 -7.8 -31.2)"/><rect x="-9.50" y="-25.10" width="3.4" height="3.4" fill="#8e30c8" transform="rotate(45 -7.8 -23.4)"/><rect x="-9.50" y="-17.30" width="3.4" height="3.4" fill="#8e30c8" transform="rotate(45 -7.8 -15.6)"/><rect x="-9.50" y="-9.50" width="3.4" height="3.4" fill="#8e30c8" transform="rotate(45 -7.8 -7.8)"/><rect x="-9.50" y="-1.70" width="3.4" height="3.4" fill="#24348e" transform="rotate(45 -7.8 0.0)"/><rect x="-9.50" y="6.10" width="3.4" height="3.4" fill="#24348e" transform="rotate(45 -7.8 7.8)"/><rect x="-9.50" y="13.90" width="3.4" height="3.4" fill="#8e30c8" transform="rotate(45 -7.8 15.6)"/><rect x="-9.50" y="21.70" width="3.4" height="3.4" fill="#8e30c8" transform="rotate(45 -7.8 23.4)"/><rect x="-9.50" y="29.50" width="3.4" height="3.4" fill="#8e30c8" transform="rotate(45 -7.8 31.2)"/><rect x="-5.60" y="-29.00" width="3.4" height="3.4" fill="#d8ceb8" transform="rotate(45 -3.9 -27.3)"/><rect x="-5.60" y="-21.20" width="3.4" height="3.4" fill="#d8ceb8" transform="rotate(45 -3.9 -19.5)"/><rect x="-5.60" y="-13.40" width="3.4" height="3.4" fill="#d8ceb8" transform="rotate(45 -3.9 -11.7)"/><rect x="-5.60" y="-5.60" width="3.4" height="3.4" fill="#d8ceb8" transform="rotate(45 -3.9 -3.9)"/><rect x="-5.60" y="2.20" width="3.4" height="3.4" fill="#24348e" transform="rotate(45 -3.9 3.9)"/><rect x="-5.60" y="10.00" width="3.4" height="3.4" fill="#24348e" transform="rotate(45 -3.9 11.7)"/><rect x="-5.60" y="17.80" width="3.4" height="3.4" fill="#d8ceb8" transform="rotate(45 -3.9 19.5)"/><rect x="-5.60" y="25.60" width="3.4" height="3.4" fill="#d8ceb8" transform="rotate(45 -3.9 27.3)"/><rect x="-1.70" y="-32.90" width="3.4" height="3.4" fill="#24348e" transform="rotate(45 0.0 -31.2)"/><rect x="-1.70" y="-25.10" width="3.4" height="3.4" fill="#30bcd0" transform="rotate(45 0.0 -23.4)"/><rect x="-1.70" y="-17.30" width="3.4" height="3.4" fill="#30bcd0" transform="rotate(45 0.0 -15.6)"/><rect x="-1.70" y="-9.50" width="3.4" height="3.4" fill="#30bcd0" transform="rotate(45 0.0 -7.8)"/><rect x="-1.70" y="-1.70" width="3.4" height="3.4" fill="#30bcd0" transform="rotate(45 0.0 0.0)"/><rect x="-1.70" y="6.10" width="3.4" height="3.4" fill="#24348e" transform="rotate(45 0.0 7.8)"/><rect x="-1.70" y="13.90" width="3.4" height="3.4" fill="#24348e" transform="rotate(45 0.0 15.6)"/><rect x="-1.70" y="21.70" width="3.4" height="3.4" fill="#30bcd0" transform="rotate(45 0.0 23.4)"/><rect x="-1.70" y="29.50" width="3.4" height="3.4" fill="#30bcd0" transform="rotate(45 0.0 31.2)"/><rect x="2.20" y="-29.00" width="3.4" height="3.4" fill="#24348e" transform="rotate(45 3.9 -27.3)"/><rect x="2.20" y="-21.20" width="3.4" height="3.4" fill="#8e30c8" transform="rotate(45 3.9 -19.5)"/><rect x="2.20" y="-13.40" width="3.4" height="3.4" fill="#8e30c8" transform="rotate(45 3.9 -11.7)"/><rect x="2.20" y="-5.60" width="3.4" height="3.4" fill="#8e30c8" transform="rotate(45 3.9 -3.9)"/><rect x="2.20" y="2.20" width="3.4" height="3.4" fill="#8e30c8" transform="rotate(45 3.9 3.9)"/><rect x="2.20" y="10.00" width="3.4" height="3.4" fill="#24348e" transform="rotate(45 3.9 11.7)"/><rect x="2.20" y="17.80" width="3.4" height="3.4" fill="#24348e" transform="rotate(45 3.9 19.5)"/><rect x="2.20" y="25.60" width="3.4" height="3.4" fill="#8e30c8" transform="rotate(45 3.9 27.3)"/><rect x="6.10" y="-32.90" width="3.4" height="3.4" fill="#24348e" transform="rotate(45 7.8 -31.2)"/><rect x="6.10" y="-25.10" width="3.4" height="3.4" fill="#24348e" transform="rotate(45 7.8 -23.4)"/><rect x="6.10" y="-17.30" width="3.4" height="3.4" fill="#d8ceb8" transform="rotate(45 7.8 -15.6)"/><rect x="6.10" y="-9.50" width="3.4" height="3.4" fill="#d8ceb8" transform="rotate(45 7.8 -7.8)"/><rect x="6.10" y="-1.70" width="3.4" height="3.4" fill="#d8ceb8" transform="rotate(45 7.8 0.0)"/><rect x="6.10" y="6.10" width="3.4" height="3.4" fill="#d8ceb8" transform="rotate(45 7.8 7.8)"/><rect x="6.10" y="13.90" width="3.4" height="3.4" fill="#24348e" transform="rotate(45 7.8 15.6)"/><rect x="6.10" y="21.70" width="3.4" height="3.4" fill="#24348e" transform="rotate(45 7.8 23.4)"/><rect x="6.10" y="29.50" width="3.4" height="3.4" fill="#d8ceb8" transform="rotate(45 7.8 31.2)"/><rect x="10.00" y="-29.00" width="3.4" height="3.4" fill="#24348e" transform="rotate(45 11.7 -27.3)"/><rect x="10.00" y="-21.20" width="3.4" height="3.4" fill="#24348e" transform="rotate(45 11.7 -19.5)"/><rect x="10.00" y="-13.40" width="3.4" height="3.4" fill="#30bcd0" transform="rotate(45 11.7 -11.7)"/><rect x="10.00" y="-5.60" width="3.4" height="3.4" fill="#30bcd0" transform="rotate(45 11.7 -3.9)"/><rect x="10.00" y="2.20" width="3.4" height="3.4" fill="#30bcd0" transform="rotate(45 11.7 3.9)"/><rect x="10.00" y="10.00" width="3.4" height="3.4" fill="#30bcd0" transform="rotate(45 11.7 11.7)"/><rect x="10.00" y="17.80" width="3.4" height="3.4" fill="#24348e" transform="rotate(45 11.7 19.5)"/><rect x="10.00" y="25.60" width="3.4" height="3.4" fill="#24348e" transform="rotate(45 11.7 27.3)"/><rect x="13.90" y="-32.90" width="3.4" height="3.4" fill="#8e30c8" transform="rotate(45 15.6 -31.2)"/><rect x="13.90" y="-25.10" width="3.4" height="3.4" fill="#24348e" transform="rotate(45 15.6 -23.4)"/><rect x="13.90" y="-17.30" width="3.4" height="3.4" fill="#24348e" transform="rotate(45 15.6 -15.6)"/><rect x="13.90" y="-9.50" width="3.4" height="3.4" fill="#8e30c8" transform="rotate(45 15.6 -7.8)"/><rect x="13.90" y="-1.70" width="3.4" height="3.4" fill="#8e30c8" transform="rotate(45 15.6 0.0)"/><rect x="13.90" y="6.10" width="3.4" height="3.4" fill="#8e30c8" transform="rotate(45 15.6 7.8)"/><rect x="13.90" y="13.90" width="3.4" height="3.4" fill="#8e30c8" transform="rotate(45 15.6 15.6)"/><rect x="13.90" y="21.70" width="3.4" height="3.4" fill="#24348e" transform="rotate(45 15.6 23.4)"/><rect x="13.90" y="29.50" width="3.4" height="3.4" fill="#24348e" transform="rotate(45 15.6 31.2)"/><rect x="17.80" y="-29.00" width="3.4" height="3.4" fill="#d8ceb8" transform="rotate(45 19.5 -27.3)"/><rect x="17.80" y="-21.20" width="3.4" height="3.4" fill="#24348e" transform="rotate(45 19.5 -19.5)"/><rect x="17.80" y="-13.40" width="3.4" height="3.4" fill="#24348e" transform="rotate(45 19.5 -11.7)"/><rect x="17.80" y="-5.60" width="3.4" height="3.4" fill="#d8ceb8" transform="rotate(45 19.5 -3.9)"/><rect x="17.80" y="2.20" width="3.4" height="3.4" fill="#d8ceb8" transform="rotate(45 19.5 3.9)"/><rect x="17.80" y="10.00" width="3.4" height="3.4" fill="#d8ceb8" transform="rotate(45 19.5 11.7)"/><rect x="17.80" y="17.80" width="3.4" height="3.4" fill="#d8ceb8" transform="rotate(45 19.5 19.5)"/><rect x="17.80" y="25.60" width="3.4" height="3.4" fill="#24348e" transform="rotate(45 19.5 27.3)"/><rect x="21.70" y="-32.90" width="3.4" height="3.4" fill="#30bcd0" transform="rotate(45 23.4 -31.2)"/><rect x="21.70" y="-25.10" width="3.4" height="3.4" fill="#30bcd0" transform="rotate(45 23.4 -23.4)"/><rect x="21.70" y="-17.30" width="3.4" height="3.4" fill="#24348e" transform="rotate(45 23.4 -15.6)"/><rect x="21.70" y="-9.50" width="3.4" height="3.4" fill="#24348e" transform="rotate(45 23.4 -7.8)"/><rect x="21.70" y="-1.70" width="3.4" height="3.4" fill="#30bcd0" transform="rotate(45 23.4 0.0)"/><rect x="21.70" y="6.10" width="3.4" height="3.4" fill="#30bcd0" transform="rotate(45 23.4 7.8)"/><rect x="21.70" y="13.90" width="3.4" height="3.4" fill="#30bcd0" transform="rotate(45 23.4 15.6)"/><rect x="21.70" y="21.70" width="3.4" height="3.4" fill="#30bcd0" transform="rotate(45 23.4 23.4)"/><rect x="21.70" y="29.50" width="3.4" height="3.4" fill="#24348e" transform="rotate(45 23.4 31.2)"/><rect x="25.60" y="-29.00" width="3.4" height="3.4" fill="#8e30c8" transform="rotate(45 27.3 -27.3)"/><rect x="25.60" y="-21.20" width="3.4" height="3.4" fill="#8e30c8" transform="rotate(45 27.3 -19.5)"/><rect x="25.60" y="-13.40" width="3.4" height="3.4" fill="#24348e" transform="rotate(45 27.3 -11.7)"/><rect x="25.60" y="-5.60" width="3.4" height="3.4" fill="#24348e" transform="rotate(45 27.3 -3.9)"/><rect x="25.60" y="2.20" width="3.4" height="3.4" fill="#8e30c8" transform="rotate(45 27.3 3.9)"/><rect x="25.60" y="10.00" width="3.4" height="3.4" fill="#8e30c8" transform="rotate(45 27.3 11.7)"/><rect x="25.60" y="17.80" width="3.4" height="3.4" fill="#8e30c8" transform="rotate(45 27.3 19.5)"/><rect x="25.60" y="25.60" width="3.4" height="3.4" fill="#8e30c8" transform="rotate(45 27.3 27.3)"/><rect x="29.50" y="-32.90" width="3.4" height="3.4" fill="#d8ceb8" transform="rotate(45 31.2 -31.2)"/><rect x="29.50" y="-25.10" width="3.4" height="3.4" fill="#d8ceb8" transform="rotate(45 31.2 -23.4)"/><rect x="29.50" y="-17.30" width="3.4" height="3.4" fill="#d8ceb8" transform="rotate(45 31.2 -15.6)"/><rect x="29.50" y="-9.50" width="3.4" height="3.4" fill="#24348e" transform="rotate(45 31.2 -7.8)"/><rect x="29.50" y="-1.70" width="3.4" height="3.4" fill="#24348e" transform="rotate(45 31.2 0.0)"/><rect x="29.50" y="6.10" width="3.4" height="3.4" fill="#d8ceb8" transform="rotate(45 31.2 7.8)"/><rect x="29.50" y="13.90" width="3.4" height="3.4" fill="#d8ceb8" transform="rotate(45 31.2 15.6)"/><rect x="29.50" y="21.70" width="3.4" height="3.4" fill="#d8ceb8" transform="rotate(45 31.2 23.4)"/><rect x="29.50" y="29.50" width="3.4" height="3.4" fill="#d8ceb8" transform="rotate(45 31.2 31.2)"/></g><rect x="-30" y="-30" width="60" height="60" fill="#1a2a8a" opacity="0.15"/><ellipse cx="-12" cy="-13" rx="5" ry="4" fill="#fff" opacity="0.35" filter="url(#bl2)" transform="rotate(-30 -12 -13)"/><circle r="29" fill="url(#dif)" opacity="0.5"/><circle r="29" fill="url(#shd)" opacity="0.95"/><circle r="29" fill="url(#edg)" opacity="0.8"/><path d="M9 -26.2 A27.6 27.6 0 0 1 27.2 4.6" fill="none" stroke="#fff" stroke-opacity="0.3" stroke-width="1.68" filter="url(#bl1)"/><path d="M30 2 L2 30 L-4 26 L26 -4 Z" fill="#000" opacity="0.18" filter="url(#bl2)"/></g><use href="#dots" fill="#7a7a7a"/></g><g transform="translate(102,269)"><g clip-path="url(#sc)"><circle r="29" fill="#56565a"/><rect x="-30" y="-30" width="60" height="60" filter="url(#nz)" opacity="0.16"/><rect x="-30" y="-30" width="60" height="60" filter="url(#nzw)" opacity="0.10"/><circle r="29" fill="url(#dif)" opacity="0.45"/><circle r="29" fill="url(#shd)" opacity="0.95"/><circle r="29" fill="url(#edg)" opacity="0.8"/><path d="M9 -26.2 A27.6 27.6 0 0 1 27.2 4.6" fill="none" stroke="#fff" stroke-opacity="0.15" stroke-width="1.44" filter="url(#bl1)"/><path d="M30 2 L2 30 L-4 26 L26 -4 Z" fill="#000" opacity="0.18" filter="url(#bl2)"/></g><use href="#dots" fill="#7a7a7a"/></g><g transform="translate(170,269)"><g clip-path="url(#sc)"><circle r="29" fill="#8e8e8e"/><rect x="-30" y="-30" width="60" height="60" filter="url(#nz)" opacity="0.16"/><rect x="-30" y="-30" width="60" height="60" filter="url(#nzw)" opacity="0.10"/><circle r="29" fill="url(#dif)" opacity="0.5"/><circle r="29" fill="url(#shd)" opacity="0.95"/><circle r="29" fill="url(#edg)" opacity="0.8"/><path d="M9 -26.2 A27.6 27.6 0 0 1 27.2 4.6" fill="none" stroke="#fff" stroke-opacity="0.2" stroke-width="1.52" filter="url(#bl1)"/><path d="M30 2 L2 30 L-4 26 L26 -4 Z" fill="#000" opacity="0.18" filter="url(#bl2)"/></g><use href="#dots" fill="#7a7a7a"/></g><g transform="translate(238,269)"><g clip-path="url(#sc)"><circle r="29" fill="#a09c92"/><rect x="-30" y="-30" width="60" height="60" filter="url(#nz)" opacity="0.16"/><rect x="-30" y="-30" width="60" height="60" filter="url(#nzw)" opacity="0.10"/><circle r="29" fill="url(#dif)" opacity="0.5"/><circle r="29" fill="url(#shd)" opacity="0.95"/><circle r="29" fill="url(#edg)" opacity="0.8"/><path d="M9 -26.2 A27.6 27.6 0 0 1 27.2 4.6" fill="none" stroke="#fff" stroke-opacity="0.2" stroke-width="1.52" filter="url(#bl1)"/><path d="M30 2 L2 30 L-4 26 L26 -4 Z" fill="#000" opacity="0.18" filter="url(#bl2)"/></g><use href="#dots" fill="#7a7a7a"/></g><g transform="translate(34,347)"><g clip-path="url(#sc)"><circle r="29" fill="#9c6432"/><rect x="-30" y="-30" width="60" height="60" filter="url(#nz)" opacity="0.16"/><rect x="-30" y="-30" width="60" height="60" filter="url(#nzw)" opacity="0.10"/><circle r="29" fill="url(#dif)" opacity="0.55"/><circle r="29" fill="url(#shd)" opacity="0.95"/><circle r="29" fill="url(#edg)" opacity="0.8"/><path d="M9 -26.2 A27.6 27.6 0 0 1 27.2 4.6" fill="none" stroke="#fff" stroke-opacity="0.25" stroke-width="1.60" filter="url(#bl1)"/><path d="M30 2 L2 30 L-4 26 L26 -4 Z" fill="#000" opacity="0.18" filter="url(#bl2)"/></g><use href="#dots" fill="#7a7a7a"/></g><g transform="translate(102,347)"><g clip-path="url(#sc)"><circle r="29" fill="#644444"/><rect x="-30" y="-30" width="60" height="60" fill="url(#pgrid)" opacity="0.5"/><circle r="29" fill="url(#dif)" opacity="0.45"/><circle r="29" fill="url(#shd)" opacity="0.92"/><circle r="29" fill="url(#edg)" opacity="0.8"/><path d="M9 -26.2 A27.6 27.6 0 0 1 27.2 4.6" fill="none" stroke="#fff" stroke-opacity="0.1" stroke-width="1.36" filter="url(#bl1)"/><path d="M30 2 L2 30 L-4 26 L26 -4 Z" fill="#000" opacity="0.18" filter="url(#bl2)"/></g><use href="#dots" fill="#7a7a7a"/></g><g transform="translate(170,347)"><g clip-path="url(#sc)"><circle r="29" fill="#2c2c2c"/><rect x="-30" y="-30" width="60" height="60" filter="url(#nz)" opacity="0.16"/><rect x="-30" y="-30" width="60" height="60" filter="url(#nzw)" opacity="0.10"/><ellipse cx="-4" cy="-18" rx="14" ry="6" fill="#fff" opacity="0.16" filter="url(#bl2)"/><circle r="29" fill="url(#dif)" opacity="0.3"/><circle r="29" fill="url(#shd)" opacity="0.75"/><circle r="29" fill="url(#edg)" opacity="0.8"/><path d="M9 -26.2 A27.6 27.6 0 0 1 27.2 4.6" fill="none" stroke="#fff" stroke-opacity="0.1" stroke-width="1.36" filter="url(#bl1)"/><path d="M30 2 L2 30 L-4 26 L26 -4 Z" fill="#000" opacity="0.18" filter="url(#bl2)"/></g><use href="#dots" fill="#7a7a7a"/></g><g transform="translate(238,347)"><defs><clipPath id="ribc"><path d="M-19 -14 C-17 -20 -10 -20 -4 -18 C6 -15 12 -8 18 -4 L18.5 12 C15 17 12 17 8 15 C0 10 -8 2 -16 -4 Z"/></clipPath></defs><path d="M23.2 8 V-21.2 A2 2 0 0 0 21.2 -23.2 H-21.2 A2 2 0 0 0 -23.2 -21.2 V21.2 A2 2 0 0 0 -21.2 23.2 H14" fill="none" stroke="#f5a02a" stroke-width="2.8"/><g clip-path="url(#ribc)"><path d="M-34.4 20 L-14.4 -22" stroke="#f5a02a" stroke-width="2.6"/><path d="M-28.2 20 L-8.2 -22" stroke="#f5a02a" stroke-width="2.6"/><path d="M-22.0 20 L-2.0 -22" stroke="#f5a02a" stroke-width="2.6"/><path d="M-15.8 20 L4.2 -22" stroke="#f5a02a" stroke-width="2.6"/><path d="M-9.6 20 L10.4 -22" stroke="#f5a02a" stroke-width="2.6"/><path d="M-3.4 20 L16.6 -22" stroke="#f5a02a" stroke-width="2.6"/><path d="M2.8 20 L22.8 -22" stroke="#f5a02a" stroke-width="2.6"/><path d="M9.0 20 L29.0 -22" stroke="#f5a02a" stroke-width="2.6"/><path d="M15.2 20 L35.2 -22" stroke="#f5a02a" stroke-width="2.6"/><path d="M21.4 20 L41.4 -22" stroke="#f5a02a" stroke-width="2.6"/><path d="M27.6 20 L47.6 -22" stroke="#f5a02a" stroke-width="2.6"/></g><path d="M-19 -14 C-17 -20 -10 -20 -4 -18 C6 -15 12 -8 18 -4 L18.5 12 C15 17 12 17 8 15 C0 10 -8 2 -16 -4 Z" fill="none" stroke="#f5a02a" stroke-width="1.6"/><circle cx="21.6" cy="24.4" r="3.3" fill="#f08a1c"/><circle cx="25.6" cy="21" r="1.7" fill="#f08a1c"/><circle cx="27.2" cy="18.4" r="0.8" fill="#f08a1c"/></g><g transform="translate(34,425)"><path d="M23.2 6 V-21.2 A2 2 0 0 0 21.2 -23.2 H-21.2 A2 2 0 0 0 -23.2 -21.2 V21.2 A2 2 0 0 0 -21.2 23.2 H6" fill="none" stroke="#b8b8b8" stroke-width="2.6"/><path d="M6.4 24.4 V8.4 A2 2 0 0 1 8.4 6.4 H24.4 Z" fill="#b8b8b8"/><circle cx="-15.6" cy="-18" r="1.05" fill="#b8b8b8"/><circle cx="-15.6" cy="-13.2" r="1.05" fill="#b8b8b8"/><circle cx="-15.6" cy="-8.4" r="1.05" fill="#b8b8b8"/><circle cx="-15.6" cy="-3.6" r="1.05" fill="#b8b8b8"/><circle cx="-11.8" cy="-15.6" r="1.05" fill="#b8b8b8"/><circle cx="-11.8" cy="-10.8" r="1.05" fill="#b8b8b8"/><circle cx="-11.8" cy="-6" r="1.05" fill="#b8b8b8"/><circle cx="-8" cy="-13.2" r="1.05" fill="#b8b8b8"/><circle cx="-8" cy="-8.4" r="1.05" fill="#b8b8b8"/><circle cx="-4.4" cy="-10.8" r="1.05" fill="#b8b8b8"/><path d="M-1 -13.4 H4 V-9.6 C7 -8.6 8.9 -6.6 8.9 -3.6 V5 H5.2 V19.3 H-6 V-3.6 C-6 -6.6 -4 -8.6 -1 -9.6 Z" fill="#b8b8b8"/><use href="#dots" fill="#7a7a7a"/></g><g transform="translate(102,425)"><path d="M-2.4 23 A23 23 0 1 1 23 -2.4" fill="none" stroke="#b8b8b8" stroke-width="2.6"/><path d="M24.2 -1.6 C12 0.4 1.6 8 -2.6 24.2 Z" fill="#b8b8b8"/><circle cx="-7.6" cy="-7.4" r="3.1" fill="#b8b8b8"/><circle cx="8.4" cy="-7.4" r="3.1" fill="#b8b8b8"/><path d="M-12.4 5 C-9 11.6 -2 13.6 3.6 11.6" fill="none" stroke="#b8b8b8" stroke-width="2.6" stroke-linecap="round"/><use href="#dots" fill="#7a7a7a"/></g><g transform="translate(170,425)"><defs><clipPath id="rvc"><circle r="28.2"/></clipPath><radialGradient id="rvg" cx="-9" cy="-10" r="36" gradientUnits="userSpaceOnUse"><stop offset="0" stop-color="#9a7a50"/><stop offset="0.35" stop-color="#5e4a30"/><stop offset="0.75" stop-color="#34281a"/><stop offset="1" stop-color="#1a140e"/></radialGradient><linearGradient id="rvch" x1="0" y1="-1" x2="0" y2="1"><stop offset="0" stop-color="#1a1a1a"/><stop offset="0.35" stop-color="#d8d8d8"/><stop offset="0.6" stop-color="#f0f0f0"/><stop offset="0.85" stop-color="#6a6a6a"/><stop offset="1" stop-color="#c0c0c0"/></linearGradient></defs><g clip-path="url(#sc)"><circle r="28.2" fill="#bdbdbd"/><rect x="-29" y="-29" width="58" height="58" fill="url(#rvch)"/><ellipse cx="0" cy="-1" rx="24.6" ry="26.4" fill="url(#rvg)"/><path d="M0 -3.6 L1 -1.1 L3.6 -1.1 L1.5 0.5 L2.3 3.1 L0 1.5 L-2.3 3.1 L-1.5 0.5 L-3.6 -1.1 L-1 -1.1 Z" fill="#1c140c" opacity="0.75" transform="translate(-15,-13)"/><path d="M0 -3.6 L1 -1.1 L3.6 -1.1 L1.5 0.5 L2.3 3.1 L0 1.5 L-2.3 3.1 L-1.5 0.5 L-3.6 -1.1 L-1 -1.1 Z" fill="#1c140c" opacity="0.75" transform="translate(-4,-19)"/><path d="M0 -3.6 L1 -1.1 L3.6 -1.1 L1.5 0.5 L2.3 3.1 L0 1.5 L-2.3 3.1 L-1.5 0.5 L-3.6 -1.1 L-1 -1.1 Z" fill="#1c140c" opacity="0.75" transform="translate(8,-17)"/><path d="M0 -3.6 L1 -1.1 L3.6 -1.1 L1.5 0.5 L2.3 3.1 L0 1.5 L-2.3 3.1 L-1.5 0.5 L-3.6 -1.1 L-1 -1.1 Z" fill="#1c140c" opacity="0.75" transform="translate(20,-2)"/><path d="M0 -3.6 L1 -1.1 L3.6 -1.1 L1.5 0.5 L2.3 3.1 L0 1.5 L-2.3 3.1 L-1.5 0.5 L-3.6 -1.1 L-1 -1.1 Z" fill="#1c140c" opacity="0.75" transform="translate(-20,2)"/><path d="M0 -3.6 L1 -1.1 L3.6 -1.1 L1.5 0.5 L2.3 3.1 L0 1.5 L-2.3 3.1 L-1.5 0.5 L-3.6 -1.1 L-1 -1.1 Z" fill="#1c140c" opacity="0.75" transform="translate(-14,13)"/><path d="M0 -3.6 L1 -1.1 L3.6 -1.1 L1.5 0.5 L2.3 3.1 L0 1.5 L-2.3 3.1 L-1.5 0.5 L-3.6 -1.1 L-1 -1.1 Z" fill="#1c140c" opacity="0.75" transform="translate(2,21)"/><path d="M0 -3.6 L1 -1.1 L3.6 -1.1 L1.5 0.5 L2.3 3.1 L0 1.5 L-2.3 3.1 L-1.5 0.5 L-3.6 -1.1 L-1 -1.1 Z" fill="#1c140c" opacity="0.75" transform="translate(15,14)"/><ellipse cx="-13" cy="-9" rx="5" ry="7" fill="#e8b888" opacity="0.55" filter="url(#bl2)" transform="rotate(30 -13 -9)"/><circle cx="0" cy="3" r="11.4" fill="#4a3c2e"/><circle cx="0" cy="3" r="11.4" fill="none" stroke="#7c6a54" stroke-width="1.2"/><ellipse cx="0.6" cy="5" rx="8.6" ry="8.2" fill="#0e0a08" filter="url(#bl1)"/><ellipse cx="-2" cy="-3" rx="6" ry="2.4" fill="#6a563c" opacity="0.7" filter="url(#bl1)"/><circle r="29" fill="url(#edg)" opacity="0.7"/></g><use href="#dots" fill="#7a7a7a"/></g><g transform="translate(238,425)"><g clip-path="url(#sc)"><circle r="29" fill="#343434"/><g transform="rotate(-22)"><rect x="-34" y="-34" width="68" height="68" filter="url(#nzh)" opacity="0.55"/></g><ellipse cx="-9" cy="-13" rx="14" ry="7" fill="#fff" opacity="0.2" filter="url(#bl2)" transform="rotate(-25 -9 -13)"/><circle r="29" fill="url(#dif)" opacity="0.3"/><circle r="29" fill="url(#shd)" opacity="0.85"/><circle r="29" fill="url(#edg)" opacity="0.8"/><path d="M9 -26.2 A27.6 27.6 0 0 1 27.2 4.6" fill="none" stroke="#fff" stroke-opacity="0.1" stroke-width="1.36" filter="url(#bl1)"/><path d="M30 2 L2 30 L-4 26 L26 -4 Z" fill="#000" opacity="0.18" filter="url(#bl2)"/></g><use href="#dots" fill="#7a7a7a"/></g><g transform="translate(34,503)"><g clip-path="url(#sc)"><circle r="29" fill="#621e30"/><rect x="-30" y="-30" width="60" height="60" fill="url(#pgrid)" opacity="0.5"/><ellipse cx="-13" cy="-13" rx="4" ry="5" fill="#fff" opacity="0.4" filter="url(#bl2)" transform="rotate(30 -13 -13)"/><circle r="29" fill="url(#dif)" opacity="0.45"/><circle r="29" fill="url(#shd)" opacity="0.95"/><circle r="29" fill="url(#edg)" opacity="0.8"/><path d="M9 -26.2 A27.6 27.6 0 0 1 27.2 4.6" fill="none" stroke="#fff" stroke-opacity="0.2" stroke-width="1.52" filter="url(#bl1)"/><path d="M30 2 L2 30 L-4 26 L26 -4 Z" fill="#000" opacity="0.18" filter="url(#bl2)"/></g><use href="#dots" fill="#7a7a7a"/></g><g transform="translate(102,503)"><g clip-path="url(#sc)"><circle r="29" fill="#c02220"/><rect x="-30" y="-30" width="60" height="60" fill="url(#pgrid)" opacity="0.5"/><ellipse cx="-12" cy="-13" rx="4" ry="5" fill="#fff" opacity="0.3" filter="url(#bl2)" transform="rotate(30 -12 -13)"/><circle r="29" fill="url(#dif)" opacity="0.45"/><circle r="29" fill="url(#shd)" opacity="0.95"/><circle r="29" fill="url(#edg)" opacity="0.8"/><path d="M9 -26.2 A27.6 27.6 0 0 1 27.2 4.6" fill="none" stroke="#fff" stroke-opacity="0.25" stroke-width="1.60" filter="url(#bl1)"/><path d="M30 2 L2 30 L-4 26 L26 -4 Z" fill="#000" opacity="0.18" filter="url(#bl2)"/></g><use href="#dots" fill="#7a7a7a"/></g><g transform="translate(170,503)"><path d="M23.2 6 V-21.2 A2 2 0 0 0 21.2 -23.2 H-21.2 A2 2 0 0 0 -23.2 -21.2 V21.2 A2 2 0 0 0 -21.2 23.2 H6" fill="none" stroke="#b8b8b8" stroke-width="2.6"/><path d="M6.4 24.4 V8.4 A2 2 0 0 1 8.4 6.4 H24.4 Z" fill="#b8b8b8"/><g fill="#b8b8b8"><ellipse cx="-12" cy="6.4" rx="1.8" ry="8.6"/><ellipse cx="-6" cy="6.4" rx="1.8" ry="8.6"/><ellipse cx="0" cy="6.4" rx="1.8" ry="8.6"/></g><path d="M-7 -16 C-4 -10 2 -8 6 -11 C9 -13 9.5 -16 11 -15.5" fill="none" stroke="#b8b8b8" stroke-width="1.7"/><path d="M11 -16.4 C14.2 -16.4 14.8 -10 13.2 -3 L11.6 3.4 L8.8 -3 C7.2 -10 7.8 -16.4 11 -16.4 Z M11 -13.5 C10 -13.5 10 -9 11 -6 C12 -9 12 -13.5 11 -13.5 Z" fill="#b8b8b8" fill-rule="evenodd"/><use href="#dots" fill="#7a7a7a"/></g><g transform="translate(238,503)"><g clip-path="url(#sc)"><circle r="29" fill="#ec8c82"/><circle r="29" fill="url(#dif)" opacity="0.55"/><circle r="29" fill="url(#shd)" opacity="0.85"/><circle r="29" fill="url(#edg)" opacity="0.8"/><path d="M9 -26.2 A27.6 27.6 0 0 1 27.2 4.6" fill="none" stroke="#fff" stroke-opacity="0.2" stroke-width="1.52" filter="url(#bl1)"/><path d="M30 2 L2 30 L-4 26 L26 -4 Z" fill="#000" opacity="0.18" filter="url(#bl2)"/></g><use href="#dots" fill="#7a7a7a"/></g><g transform="translate(34,581)"><g clip-path="url(#sc)"><circle r="29" fill="#5a6c84"/><rect x="-30" y="-30" width="60" height="60" filter="url(#nz)" opacity="0.16"/><rect x="-30" y="-30" width="60" height="60" filter="url(#nzw)" opacity="0.10"/><circle r="29" fill="url(#dif)" opacity="0.45"/><circle r="29" fill="url(#shd)" opacity="0.9"/><circle r="29" fill="url(#edg)" opacity="0.8"/><path d="M9 -26.2 A27.6 27.6 0 0 1 27.2 4.6" fill="none" stroke="#fff" stroke-opacity="0.12" stroke-width="1.39" filter="url(#bl1)"/><path d="M30 2 L2 30 L-4 26 L26 -4 Z" fill="#000" opacity="0.18" filter="url(#bl2)"/></g><use href="#dots" fill="#7a7a7a"/></g><g transform="translate(102,581)"><g clip-path="url(#sc)"><circle r="29" fill="#a8a8a8"/><rect x="-30" y="-30" width="60" height="32" fill="url(#feg)"/><ellipse cx="-15" cy="-11" rx="5" ry="6" fill="#fff" opacity="0.85" filter="url(#bl2)" transform="rotate(20 -15 -11)"/><path d="M-30 2 L-28.7 -0.6 L-27.1 -0.9 L-26.0 0.6 L-24.6 2.0 L-23.7 -4.2 L-22.0 -10.3 L-21.0 -10.9 L-19.8 3.1 L-18.9 -5.9 L-18.0 -0.5 L-16.2 -2.0 L-15.1 -0.6 L-13.6 -13.5 L-12.0 -2.1 L-10.8 0.4 L-9.8 -7.8 L-8.0 1.7 L-6.9 -12.6 L-5.4 -7.9 L-4.6 -3.0 L-3.6 -9.9 L-2.7 -6.4 L-1.3 0.2 L-0.3 -9.0 L0.6 -13.7 L1.6 1.2 L2.7 -2.3 L4.0 -1.3 L4.8 -3.1 L5.9 -8.0 L7.0 -0.2 L8.2 -9.0 L9.5 -1.3 L10.8 0.6 L12.4 2.9 L14.1 -7.6 L14.9 -3.4 L15.8 0.6 L17.0 -1.1 L18.5 -3.6 L20.3 2.1 L21.3 -10.1 L22.7 -12.1 L23.8 -11.7 L25.5 -0.8 L26.4 -1.4 L27.3 -7.4 L29.0 1.7 L30.5 -0.3 L30 30 L-30 30 Z" fill="#0a0a0a" filter="url(#bl1)" opacity="0.95"/><path d="M-30 4 H30 V20 H-30 Z" fill="#0a0a0a"/><path d="M-30 19.4 C-10 23 10 23 30 19.4 V30 H-30 Z" fill="#b4b4b4"/><path d="M-30 -30 H30 V-23.4 C10 -27.8 -10 -27.8 -30 -23.4 Z" fill="#141414" opacity="0.95"/><circle r="29" fill="url(#dif)" opacity="0.0"/><circle r="29" fill="url(#shd)" opacity="0.25"/><circle r="29" fill="url(#edg)" opacity="0.5"/><path d="M30 2 L2 30 L-4 26 L26 -4 Z" fill="#000" opacity="0.18" filter="url(#bl2)"/></g><use href="#dots" fill="#7a7a7a"/></g><g transform="translate(170,581)"><g clip-path="url(#sc)"><circle r="29" fill="#808a98"/><rect x="-30" y="-30" width="60" height="60" filter="url(#nz)" opacity="0.16"/><rect x="-30" y="-30" width="60" height="60" filter="url(#nzw)" opacity="0.10"/><circle r="29" fill="url(#dif)" opacity="0.45"/><circle r="29" fill="url(#shd)" opacity="0.9"/><circle r="29" fill="url(#edg)" opacity="0.8"/><path d="M9 -26.2 A27.6 27.6 0 0 1 27.2 4.6" fill="none" stroke="#fff" stroke-opacity="0.12" stroke-width="1.39" filter="url(#bl1)"/><path d="M30 2 L2 30 L-4 26 L26 -4 Z" fill="#000" opacity="0.18" filter="url(#bl2)"/></g><use href="#dots" fill="#7a7a7a"/></g><g transform="translate(238,581)"><g clip-path="url(#sc)"><circle r="29" fill="#4e3e3a"/><rect x="-30" y="-30" width="60" height="60" filter="url(#nz)" opacity="0.16"/><rect x="-30" y="-30" width="60" height="60" filter="url(#nzw)" opacity="0.10"/><rect x="-30" y="-30" width="60" height="60" filter="url(#nzv)" opacity="0.25"/><circle r="29" fill="url(#dif)" opacity="0.3"/><circle r="29" fill="url(#shd)" opacity="0.9"/><circle r="29" fill="url(#edg)" opacity="0.8"/><path d="M30 2 L2 30 L-4 26 L26 -4 Z" fill="#000" opacity="0.18" filter="url(#bl2)"/></g><use href="#dots" fill="#7a7a7a"/></g><g transform="translate(34,659)"><g clip-path="url(#sc)"><circle r="29" fill="#988c84"/><rect x="-30" y="-30" width="60" height="60" fill="url(#pgrid)" opacity="0.45"/><rect x="-30" y="-30" width="60" height="60" filter="url(#nz)" opacity="0.16"/><rect x="-30" y="-30" width="60" height="60" filter="url(#nzw)" opacity="0.10"/><circle r="29" fill="url(#dif)" opacity="0.45"/><circle r="29" fill="url(#shd)" opacity="0.88"/><circle r="29" fill="url(#edg)" opacity="0.8"/><path d="M9 -26.2 A27.6 27.6 0 0 1 27.2 4.6" fill="none" stroke="#fff" stroke-opacity="0.12" stroke-width="1.39" filter="url(#bl1)"/><path d="M30 2 L2 30 L-4 26 L26 -4 Z" fill="#000" opacity="0.18" filter="url(#bl2)"/></g><use href="#dots" fill="#7a7a7a"/></g><g transform="translate(102,659)"><g clip-path="url(#sc)"><circle r="29" fill="#a83a46"/><rect x="-30" y="-30" width="60" height="60" fill="url(#pvert)"/><circle r="29" fill="url(#dif)" opacity="0.5"/><circle r="29" fill="url(#shd)" opacity="0.92"/><circle r="29" fill="url(#edg)" opacity="0.8"/><path d="M9 -26.2 A27.6 27.6 0 0 1 27.2 4.6" fill="none" stroke="#fff" stroke-opacity="0.15" stroke-width="1.44" filter="url(#bl1)"/><path d="M30 2 L2 30 L-4 26 L26 -4 Z" fill="#000" opacity="0.18" filter="url(#bl2)"/></g><use href="#dots" fill="#7a7a7a"/></g><g transform="translate(170,659)"><ellipse cx="0" cy="0" rx="3.4" ry="28" fill="#2e2e2e" filter="url(#bl1)"/><ellipse cx="0" cy="0" rx="1.6" ry="26" fill="#3e3e3e"/><use href="#dots" fill="#7a7a7a"/></g><g transform="translate(238,659)"><g clip-path="url(#sc)"><circle r="29" fill="#acac3a"/><ellipse cx="-13" cy="-12" rx="4" ry="5" fill="#fff" opacity="0.35" filter="url(#bl2)" transform="rotate(30 -13 -12)"/><circle r="29" fill="url(#dif)" opacity="0.55"/><circle r="29" fill="url(#shd)" opacity="0.95"/><circle r="29" fill="url(#edg)" opacity="0.8"/><path d="M9 -26.2 A27.6 27.6 0 0 1 27.2 4.6" fill="none" stroke="#fff" stroke-opacity="0.35" stroke-width="1.76" filter="url(#bl1)"/><path d="M30 2 L2 30 L-4 26 L26 -4 Z" fill="#000" opacity="0.18" filter="url(#bl2)"/></g><use href="#dots" fill="#7a7a7a"/></g><g transform="translate(34,737)"><g clip-path="url(#sc)"><circle r="29" fill="#c0c0c0"/><path d="M0 -30 V30" stroke="#555" stroke-width="1"/><path d="M0.6 -30 H30 V30 H0.6 Z" fill="#000" opacity="0.12"/><ellipse cx="-14" cy="-8" rx="3" ry="5" fill="#fff" opacity="0.9" filter="url(#bl1)" transform="rotate(25 -14 -8)"/><circle r="29" fill="url(#dif)" opacity="0.5"/><circle r="29" fill="url(#shd)" opacity="0.75"/><circle r="29" fill="url(#edg)" opacity="0.8"/><path d="M9 -26.2 A27.6 27.6 0 0 1 27.2 4.6" fill="none" stroke="#fff" stroke-opacity="0.5" stroke-width="2.00" filter="url(#bl1)"/><path d="M6 -25 A26 26 0 0 1 26 2" fill="none" stroke="#fff" stroke-opacity="0.21" stroke-width="5" filter="url(#bl2)"/><path d="M30 2 L2 30 L-4 26 L26 -4 Z" fill="#000" opacity="0.18" filter="url(#bl2)"/></g><use href="#dots" fill="#7a7a7a"/></g><g transform="translate(102,737)"><g clip-path="url(#sc)"><circle r="29" fill="#768258"/><rect x="-30" y="-30" width="60" height="60" filter="url(#nz)" opacity="0.16"/><rect x="-30" y="-30" width="60" height="60" filter="url(#nzw)" opacity="0.10"/><circle r="29" fill="url(#dif)" opacity="0.45"/><circle r="29" fill="url(#shd)" opacity="0.9"/><circle r="29" fill="url(#edg)" opacity="0.8"/><path d="M9 -26.2 A27.6 27.6 0 0 1 27.2 4.6" fill="none" stroke="#fff" stroke-opacity="0.1" stroke-width="1.36" filter="url(#bl1)"/><path d="M30 2 L2 30 L-4 26 L26 -4 Z" fill="#000" opacity="0.18" filter="url(#bl2)"/></g><use href="#dots" fill="#7a7a7a"/></g><g transform="translate(170,737)"><g clip-path="url(#sc)"><circle r="29" fill="#1c2c8a"/><rect x="-30" y="-30" width="60" height="60" fill="url(#pgrid)" opacity="0.5"/><ellipse cx="-10" cy="-16" rx="6" ry="3" fill="#fff" opacity="0.3" filter="url(#bl2)" transform="rotate(-20 -10 -16)"/><circle r="29" fill="url(#dif)" opacity="0.4"/><circle r="29" fill="url(#shd)" opacity="0.9"/><circle r="29" fill="url(#edg)" opacity="0.8"/><path d="M9 -26.2 A27.6 27.6 0 0 1 27.2 4.6" fill="none" stroke="#fff" stroke-opacity="0.2" stroke-width="1.52" filter="url(#bl1)"/><path d="M30 2 L2 30 L-4 26 L26 -4 Z" fill="#000" opacity="0.18" filter="url(#bl2)"/></g><use href="#dots" fill="#7a7a7a"/></g><g transform="translate(238,737)"><g clip-path="url(#sc)"><circle r="29" fill="#cecece"/><g fill="#1a1a1a" opacity="0.85" filter="url(#bl1)"><ellipse cx="5.9" cy="7.1" rx="2.2" ry="1.4"/><ellipse cx="11.5" cy="11.9" rx="0.9" ry="1.0"/><ellipse cx="21.3" cy="-0.0" rx="2.4" ry="0.7"/><ellipse cx="-1.5" cy="-9.1" rx="1.8" ry="1.1"/><ellipse cx="-23.4" cy="-6.1" rx="1.3" ry="1.3"/><ellipse cx="12.8" cy="-6.8" rx="2.2" ry="0.7"/><ellipse cx="5.6" cy="-7.7" rx="0.8" ry="1.3"/><ellipse cx="-13.9" cy="-11.7" rx="2.6" ry="1.3"/><ellipse cx="-10.1" cy="5.1" rx="1.8" ry="1.1"/><ellipse cx="-14.2" cy="5.8" rx="2.0" ry="1.4"/><ellipse cx="18.9" cy="-6.9" rx="1.5" ry="0.7"/><ellipse cx="-17.0" cy="-13.6" rx="1.3" ry="1.1"/><ellipse cx="-23.8" cy="5.2" rx="1.4" ry="0.8"/><ellipse cx="15.3" cy="-0.2" rx="1.4" ry="1.0"/><ellipse cx="9.8" cy="-8.6" rx="2.6" ry="0.6"/><ellipse cx="12.0" cy="9.9" rx="0.8" ry="1.2"/><ellipse cx="-6.4" cy="-3.6" rx="0.8" ry="0.6"/><ellipse cx="-15.3" cy="6.7" rx="1.2" ry="1.2"/><ellipse cx="20.6" cy="7.4" rx="1.4" ry="0.9"/><ellipse cx="1.2" cy="5.4" rx="1.0" ry="1.2"/><ellipse cx="14.3" cy="9.4" rx="0.9" ry="1.4"/><ellipse cx="-19.6" cy="-5.3" rx="1.9" ry="1.3"/><ellipse cx="-7.7" cy="4.3" rx="1.8" ry="0.8"/><ellipse cx="-8.8" cy="-13.7" rx="0.9" ry="0.7"/><ellipse cx="9.1" cy="13.9" rx="1.1" ry="0.6"/><ellipse cx="23.4" cy="-3.9" rx="1.5" ry="0.8"/><ellipse cx="4.5" cy="8.6" rx="1.6" ry="0.9"/><ellipse cx="-21.3" cy="9.6" rx="0.9" ry="1.0"/><ellipse cx="16.2" cy="-9.2" rx="2.1" ry="1.4"/><ellipse cx="6.3" cy="8.4" rx="1.0" ry="0.9"/><ellipse cx="-16.8" cy="5.0" rx="1.3" ry="1.0"/><ellipse cx="24.0" cy="3.4" rx="2.6" ry="1.0"/><ellipse cx="-0.6" cy="3.1" rx="1.7" ry="0.8"/><ellipse cx="-4.6" cy="-13.3" rx="1.5" ry="1.4"/><ellipse cx="22.1" cy="-1.0" rx="1.7" ry="0.9"/><ellipse cx="-19.7" cy="-6.9" rx="2.2" ry="1.3"/><ellipse cx="-6.7" cy="1.3" rx="2.2" ry="1.2"/><ellipse cx="7.9" cy="8.1" rx="1.5" ry="1.2"/><ellipse cx="-10.5" cy="-6.3" rx="2.2" ry="1.2"/><ellipse cx="-9.9" cy="4.7" rx="2.0" ry="1.1"/><ellipse cx="-23.4" cy="1.9" rx="1.3" ry="1.1"/><ellipse cx="-1.8" cy="4.4" rx="2.0" ry="1.2"/><ellipse cx="-7.3" cy="-2.3" rx="2.1" ry="1.3"/><ellipse cx="-7.2" cy="2.5" rx="2.4" ry="1.2"/><ellipse cx="22.9" cy="6.5" rx="1.7" ry="1.0"/><ellipse cx="-16.0" cy="4.3" rx="2.5" ry="1.0"/></g><ellipse cx="-15" cy="-12" rx="3" ry="5" fill="#fff" opacity="0.9" filter="url(#bl1)" transform="rotate(25 -15 -12)"/><circle r="29" fill="url(#dif)" opacity="0.5"/><circle r="29" fill="url(#shd)" opacity="0.7"/><circle r="29" fill="url(#edg)" opacity="0.8"/><path d="M9 -26.2 A27.6 27.6 0 0 1 27.2 4.6" fill="none" stroke="#fff" stroke-opacity="0.4" stroke-width="1.84" filter="url(#bl1)"/><path d="M30 2 L2 30 L-4 26 L26 -4 Z" fill="#000" opacity="0.18" filter="url(#bl2)"/></g><use href="#dots" fill="#7a7a7a"/></g></svg>
<span class="t" style="left:47.10px;top:222.00px;font-size:10px;line-height:10px;color:#e4e4e4;transform:scaleX(0.9714);">Acajou Wo...</span>
<span class="t" style="left:117.00px;top:222.00px;font-size:10px;line-height:10px;color:#e4e4e4;transform:scaleX(1.0100);">Aged Wood</span>
<span class="t" style="left:185.20px;top:222.00px;font-size:10px;line-height:10px;color:#e4e4e4;transform:scaleX(0.9930);">Autumn L...</span>
<span class="t" style="left:254.40px;top:222.00px;font-size:10px;line-height:10px;color:#e4e4e4;transform:scaleX(0.9389);">Baked Lig...</span>
<span class="t" style="left:56.30px;top:300.00px;font-size:10px;line-height:10px;color:#e4e4e4;transform:scaleX(0.9664);">Bandage</span>
<span class="t" style="left:120.40px;top:300.00px;font-size:10px;line-height:10px;color:#e4e4e4;transform:scaleX(0.9213);">Basic Stem</span>
<span class="t" style="left:191.30px;top:300.00px;font-size:10px;line-height:10px;color:#e4e4e4;transform:scaleX(0.9221);">Basil Leaf</span>
<span class="t" style="left:252.20px;top:300.00px;font-size:10px;line-height:10px;color:#e4e4e4;transform:scaleX(0.9611);">Bull Leather</span>
<span class="t" style="left:47.10px;top:378.00px;font-size:10px;line-height:10px;color:#e4e4e4;transform:scaleX(0.9613);">Carbon Fiber</span>
<span class="t" style="left:119.80px;top:378.00px;font-size:10px;line-height:10px;color:#e4e4e4;transform:scaleX(0.9437);">Carrot Skin</span>
<span class="t" style="left:182.80px;top:378.00px;font-size:10px;line-height:10px;color:#e4e4e4;transform:scaleX(0.9143);">Clay Earthe...</span>
<span class="t" style="left:251.70px;top:378.00px;font-size:10px;line-height:10px;color:#e4e4e4;transform:scaleX(0.9111);">Clay Terrac...</span>
<span class="t" style="left:47.10px;top:456.00px;font-size:10px;line-height:10px;color:#e4e4e4;transform:scaleX(0.9575);">Climbing R...</span>
<span class="t" style="left:115.00px;top:456.00px;font-size:10px;line-height:10px;color:#e4e4e4;transform:scaleX(0.9476);">Concrete A...</span>
<span class="t" style="left:182.80px;top:456.00px;font-size:10px;line-height:10px;color:#e4e4e4;transform:scaleX(0.9402);">Concrete C...</span>
<span class="t" style="left:251.00px;top:456.00px;font-size:10px;line-height:10px;color:#e4e4e4;transform:scaleX(0.9334);">Concrete C...</span>
<span class="t" style="left:48.10px;top:534.00px;font-size:10px;line-height:10px;color:#e4e4e4;transform:scaleX(0.9675);">Cork Natural</span>
<span class="t" style="left:115.70px;top:534.00px;font-size:10px;line-height:10px;color:#e4e4e4;transform:scaleX(0.9222);">Crackled C...</span>
<span class="t" style="left:184.90px;top:534.00px;font-size:10px;line-height:10px;color:#e4e4e4;transform:scaleX(0.9595);">Crocodile ...</span>
<span class="t" style="left:252.70px;top:534.00px;font-size:10px;line-height:10px;color:#e4e4e4;transform:scaleX(0.9543);">Custom Ri...</span>
<span class="t" style="left:47.10px;top:612.00px;font-size:10px;line-height:10px;color:#e4e4e4;transform:scaleX(0.9479);">Custom Sp...</span>
<span class="t" style="left:115.70px;top:612.00px;font-size:10px;line-height:10px;color:#e4e4e4;transform:scaleX(0.9450);">Custom Sti...</span>
<span class="t" style="left:185.40px;top:612.00px;font-size:10px;line-height:10px;color:#e4e4e4;transform:scaleX(0.9696);">Denim Rivet</span>
<span class="t" style="left:257.40px;top:612.00px;font-size:10px;line-height:10px;color:#e4e4e4;transform:scaleX(0.9700);">Duct Tape</span>
<span class="t" style="left:49.20px;top:690.00px;font-size:10px;line-height:10px;color:#e4e4e4;transform:scaleX(0.9695);">Dyed Allig...</span>
<span class="t" style="left:116.50px;top:690.00px;font-size:10px;line-height:10px;color:#e4e4e4;transform:scaleX(0.9446);">Dyed Croc...</span>
<span class="t" style="left:186.40px;top:690.00px;font-size:10px;line-height:10px;color:#e4e4e4;transform:scaleX(0.9623);">Embroidery</span>
<span class="t" style="left:252.20px;top:690.00px;font-size:10px;line-height:10px;color:#e4e4e4;transform:scaleX(0.9397);">Fabric Cott...</span>
<span class="t" style="left:48.10px;top:768.00px;font-size:10px;line-height:10px;color:#e4e4e4;transform:scaleX(0.9397);">Fabric Den...</span>
<span class="t" style="left:116.50px;top:768.00px;font-size:10px;line-height:10px;color:#e4e4e4;transform:scaleX(0.9259);">Fabric Edg...</span>
<span class="t" style="left:189.50px;top:768.00px;font-size:10px;line-height:10px;color:#e4e4e4;transform:scaleX(0.9209);">Fabric Felt</span>
<span class="t" style="left:255.30px;top:768.00px;font-size:10px;line-height:10px;color:#e4e4e4;transform:scaleX(0.9321);">Fabric Lace</span>
<span class="t" style="left:49.20px;top:846.00px;font-size:10px;line-height:10px;color:#e4e4e4;transform:scaleX(0.9576);">Fabric Linen</span>
<span class="t" style="left:116.50px;top:846.00px;font-size:10px;line-height:10px;color:#e4e4e4;transform:scaleX(0.9675);">Fabric Nylon</span>
<span class="t" style="left:184.40px;top:846.00px;font-size:10px;line-height:10px;color:#e4e4e4;transform:scaleX(0.9352);">Fabric Puc...</span>
<span class="t" style="left:252.20px;top:846.00px;font-size:10px;line-height:10px;color:#e4e4e4;transform:scaleX(0.9133);">Fabric Rips...</span>
<svg class="b" style="left:46.9px;top:913px;" width="17" height="13.2" viewBox="0 0 17 13.2"><path d="M0 0 H14.3 V2 H0 Z M0 5 H6.1 V7 H0 Z M0 10 H6.1 V12 H0 Z" fill="#cfcfcf"/><path fill-rule="evenodd" d="M8 4.9 H14.4 L16.2 6.7 V13 H8 Z M11.3 4.9 V7.5 H13.9 V4.9 Z M9.3 9.1 V11.9 H13.9 V9.1 Z" fill="#cfcfcf"/><rect x="12.3" y="5" width="0.8" height="1.9" fill="#cfcfcf"/><rect x="9.9" y="10.1" width="3.4" height="0.9" fill="#777"/></svg>
<svg class="b" style="left:77px;top:913px;" width="17" height="13.2" viewBox="0 0 17 13.2"><path d="M0 0 H13.2 V2 H0 Z M0 5 H4.1 V7 H0 Z M0 10 H4.1 V12 H0 Z" fill="#cfcfcf"/><path d="M5.9 5 H10 L11.6 6.7 H16.2 V13 H5.9 Z" fill="#cfcfcf"/><rect x="7.2" y="6" width="2.2" height="0.9" fill="#555"/></svg>
<svg class="b" style="left:258px;top:910px;" width="26" height="18" viewBox="0 0 26 18"><g fill="none" stroke="#cfcfcf" stroke-width="2.1"><path d="M2.2 8.6 A6.6 6.6 0 0 1 13.4 4.2"/><path d="M15.6 9.6 A6.6 6.6 0 0 1 4.4 14"/></g><path d="M16 1.2 V7.8 H9.4 Z M1.8 17 V10.4 H8.4 Z" fill="#cfcfcf"/><path d="M18.4 12.4 L21.6 15.6 L24.8 12.4" fill="none" stroke="#cfcfcf" stroke-width="1.6"/></svg>
<div class="b" style="left:293px;top:907px;width:1px;height:24px;background:#292929;"></div>
<svg class="b" style="left:303px;top:909.7px;" width="18" height="18" viewBox="0 0 18 18"><g fill="none" stroke="#cfcfcf" stroke-width="1.3"><path d="M2.4 6 A7.3 7.3 0 1 1 1.7 9.4"/><path d="M6.6 6.4 L12 11.8 M12 6.4 L6.6 11.8"/><path d="M0.6 3 L2.2 6.6 L5.6 5.2"/></g></svg>
<svg class="b" style="left:334.1px;top:912px;" width="16" height="14" viewBox="0 0 16 14"><path d="M0.65 0.65 H15.15 V12.95 H0.65 Z M7.6 0.65 V3.2 H15.15" fill="none" stroke="#cfcfcf" stroke-width="1.3"/></svg>
<svg class="b" style="left:366.8px;top:914.1px;" width="11" height="11" viewBox="0 0 11 11"><path d="M5.2 0.2 V10 M0.1 5.1 H10.3" stroke="#cfcfcf" stroke-width="2.3"/></svg>
<div class="b" style="left:394px;top:62px;width:916px;height:865px;background:#000;"></div>
<svg class="b" style="left:402px;top:34px;" width="16" height="16" viewBox="0 0 16 16"><circle cx="8" cy="8" r="6.6" fill="none" stroke="#d0d0d0" stroke-width="1.2" stroke-dasharray="1.7 1.75"/></svg>
<svg class="b" style="left:417px;top:49.6px;" width="8.4" height="5.2" viewBox="0 0 8.4 5.2"><path d="M1 1 L4.20 4.20 L7.4 1" fill="none" stroke="#bdbdbd" stroke-width="1.1"/></svg>
<div class="b" style="left:431px;top:31px;width:1px;height:24px;background:#272727;"></div>
<span class="t" style="left:437.40px;top:29.00px;font-size:10.5px;line-height:10.5px;color:#dedede;transform:scaleX(0.9402);">Size</span>
<span class="t" style="left:521.80px;top:29.00px;font-size:10.5px;line-height:10.5px;color:#dedede;transform:scaleX(0.9583);">10</span>
<div class="b" style="left:437.4px;top:51px;width:99.39999999999998px;height:2px;background:#4e4e4e;border-radius:1px;"></div>
<div class="b" style="left:437.4px;top:51px;width:24.80000000000001px;height:2px;background:#d8d8d8;border-radius:1px;"></div>
<svg class="b" style="left:461.9px;top:45px;" width="14" height="14" viewBox="0 0 14 14"><circle cx="7" cy="7" r="5.2" fill="#333" stroke="#d8d8d8" stroke-width="1.6"/></svg>
<div class="b" style="left:543px;top:28px;width:28px;height:28px;background:#4d4d4d;border-radius:3px;"></div>
<svg class="b" style="left:550.8px;top:36.4px;" width="12" height="12" viewBox="0 0 12 12"><circle cx="4.2" cy="7.9" r="3" fill="#d0d0d0"/><path d="M11.3 0.6 L6.45 10.0 L2.0 5.75 Z" fill="#d0d0d0"/></svg>
<span class="t" style="left:577.20px;top:29.00px;font-size:10.5px;line-height:10.5px;color:#dedede;transform:scaleX(1.1058);">Flow</span>
<span class="t" style="left:655.40px;top:29.00px;font-size:10.5px;line-height:10.5px;color:#dedede;transform:scaleX(1.0210);">100</span>
<div class="b" style="left:577.2px;top:51px;width:96.79999999999995px;height:2px;background:#4e4e4e;border-radius:1px;"></div>
<div class="b" style="left:577.2px;top:51px;width:84.89999999999986px;height:2px;background:#d8d8d8;border-radius:1px;"></div>
<svg class="b" style="left:661.8px;top:45px;" width="14" height="14" viewBox="0 0 14 14"><circle cx="7" cy="7" r="5.2" fill="#333" stroke="#d8d8d8" stroke-width="1.6"/></svg>
<svg class="b" style="left:690.6px;top:36.4px;" width="12" height="12" viewBox="0 0 12 12"><circle cx="4.2" cy="7.9" r="3" fill="#d0d0d0"/><path d="M11.3 0.6 L6.45 10.0 L2.0 5.75 Z" fill="#d0d0d0"/></svg>
<div class="b" style="left:716.8px;top:26px;width:54.2px;height:20px;overflow:hidden">
<span class="t" style="left:0.00px;top:3.00px;font-size:10.5px;line-height:10.5px;color:#dedede;transform:scaleX(1.0667);">Stroke opacity</span>
</div>
<span class="t" style="left:795.60px;top:29.00px;font-size:10.5px;line-height:10.5px;color:#dedede;transform:scaleX(0.9982);">100</span>
<div class="b" style="left:716.8px;top:51px;width:97.20000000000005px;height:2px;background:#4e4e4e;border-radius:1px;"></div>
<div class="b" style="left:716.8px;top:51px;width:85.10000000000002px;height:2px;background:#d8d8d8;border-radius:1px;"></div>
<svg class="b" style="left:801.6px;top:45px;" width="14" height="14" viewBox="0 0 14 14"><circle cx="7" cy="7" r="5.2" fill="#333" stroke="#d8d8d8" stroke-width="1.6"/></svg>
<span class="t" style="left:823.00px;top:29.00px;font-size:10.5px;line-height:10.5px;color:#dedede;transform:scaleX(1.0645);">Spacing</span>
<span class="t" style="left:907.20px;top:29.00px;font-size:10.5px;line-height:10.5px;color:#dedede;transform:scaleX(1.0353);">20</span>
<div class="b" style="left:823.0px;top:51px;width:99.89999999999998px;height:2px;background:#4e4e4e;border-radius:1px;"></div>
<div class="b" style="left:823.0px;top:51px;width:4.0px;height:2px;background:#d8d8d8;border-radius:1px;"></div>
<svg class="b" style="left:826.7px;top:45px;" width="14" height="14" viewBox="0 0 14 14"><circle cx="7" cy="7" r="5.2" fill="#333" stroke="#d8d8d8" stroke-width="1.6"/></svg>
<div class="b" style="left:934px;top:31px;width:1px;height:24px;background:#272727;"></div>
<svg class="b" style="left:946px;top:33px;" width="20" height="20" viewBox="0 0 20 20"><circle cx="14.4" cy="5" r="3.2" fill="#d0d0d0"/><circle cx="5.6" cy="14.6" r="3.2" fill="#d0d0d0"/><circle cx="10" cy="9.8" r="0.7" fill="#888"/></svg>
<div class="b" style="left:979.2px;top:26px;width:21.6px;height:34px;background:#2b2b2b;border:1px solid #4c4c4c;box-sizing:border-box;"></div>
<svg class="b" style="left:984px;top:38px;" width="12" height="10" viewBox="0 0 12 10"><path d="M1 0.6 L5.4 5 L1 9.4 M6.2 0.6 L10.6 5 L6.2 9.4" fill="none" stroke="#d0d0d0" stroke-width="1.6"/></svg>
<svg class="b" style="left:1018px;top:35px;" width="18" height="18" viewBox="0 0 18 18"><rect x="1.2" y="1.2" width="15.8" height="15.4" fill="none" stroke="#b0b0b0" stroke-width="1" stroke-dasharray="2.7 1.8"/><path d="M4 9.2 C6 5.6 12.2 5.6 14.4 9.2 C12.2 12.6 6 12.6 4 9.2 Z" fill="none" stroke="#b0b0b0" stroke-width="1.1"/><path d="M4.6 4 L14 14" stroke="#b0b0b0" stroke-width="1.2"/></svg>
<div class="b" style="left:1048px;top:31px;width:1px;height:24px;background:#272727;"></div>
<div class="b" style="left:1065.9px;top:38.9px;width:3.9px;height:10.1px;background:#dedede;"></div>
<div class="b" style="left:1072.4px;top:38.9px;width:3.9px;height:10.1px;background:#dedede;"></div>
<div class="b" style="left:1093px;top:31px;width:1px;height:24px;background:#272727;"></div>
<svg class="b" style="left:1106px;top:36px;" width="18" height="17" viewBox="0 0 18 17"><path d="M1 1 L15.6 3.6 V12.4 L1 15.6 Z" fill="none" stroke="#d0d0d0" stroke-width="1.3" stroke-linejoin="round"/></svg>
<svg class="b" style="left:1121.2px;top:51.3px;" width="9.2" height="5.7" viewBox="0 0 9.2 5.7"><path d="M1 1 L4.60 4.70 L8.2 1" fill="none" stroke="#bdbdbd" stroke-width="1.1"/></svg>
<svg class="b" style="left:1139px;top:36px;" width="16" height="16" viewBox="0 0 16 16"><path d="M8 0.4 L15.2 3.2 V12 L8 15.6 L0.8 12 V3.2 Z" fill="#d0d0d0"/><path d="M0.8 3.2 L8 6.4 L15.2 3.2 M8 6.4 V15.6" stroke="#333" stroke-width="1" fill="none"/></svg>
<svg class="b" style="left:1153.2px;top:51.3px;" width="9.2" height="5.7" viewBox="0 0 9.2 5.7"><path d="M1 1 L4.60 4.70 L8.2 1" fill="none" stroke="#bdbdbd" stroke-width="1.1"/></svg>
<svg class="b" style="left:1171px;top:38.4px;" width="17" height="11.4" viewBox="0 0 17 11.4"><rect x="0" y="0" width="11.6" height="11.4" rx="2.4" fill="#d0d0d0"/><path d="M12.6 3.8 L16.4 1.4 V10 L12.6 7.6 Z" fill="#d0d0d0"/></svg>
<svg class="b" style="left:1185.2px;top:51.3px;" width="9.2" height="5.7" viewBox="0 0 9.2 5.7"><path d="M1 1 L4.60 4.70 L8.2 1" fill="none" stroke="#bdbdbd" stroke-width="1.1"/></svg>
<div class="b" style="left:1200px;top:31px;width:1px;height:24px;background:#272727;"></div>
<svg class="b" style="left:1214px;top:36px;" width="17" height="16" viewBox="0 0 17 16"><path d="M9.4 0.4 C14 1.8 16.8 7 14.8 11.2 C12.8 15.2 6 16.6 0.2 11.4 C4 12.4 8.2 11.4 9.4 8.4 C10.4 6 9.6 3 8 1.4 Z" fill="#d0d0d0"/><path d="M9.8 4.6 L15.8 3.4 M9.6 8.6 L15.6 12.4 M6.8 11.2 L8.2 16 M3.6 11.6 L2.4 15" stroke="#333" stroke-width="1" fill="none"/></svg>
<div class="b" style="left:1242px;top:28px;width:32px;height:32px;background:#4d4d4d;border-radius:4px;"></div>
<svg class="b" style="left:1250.2px;top:36.2px;overflow:visible;" width="16.0" height="16.0" viewBox="0 0 16 16"><path d="M0.18 15.69 Q3.51 15.39 5.27 13.47 L6.54 11.47 L4.03 8.89 L2.00 10.09 Q0.44 12.79 0.18 15.69 Z" fill="#d8d8d8"/><path d="M7.19 10.70 L15.53 1.92 Q15.34 0.44 13.86 0.20 L4.82 8.26 Z" fill="#d8d8d8"/></svg>
<svg class="b" style="left:1285.6px;top:37px;" width="17" height="14.4" viewBox="0 0 17 14.4"><path fill-rule="evenodd" d="M1.2 2.6 H4.2 L5.4 0.4 H11.6 L12.8 2.6 H15.8 A1.2 1.2 0 0 1 17 3.8 V13.2 A1.2 1.2 0 0 1 15.8 14.4 H1.2 A1.2 1.2 0 0 1 0 13.2 V3.8 A1.2 1.2 0 0 1 1.2 2.6 Z M8.5 4.2 A4.1 4.1 0 1 0 8.5 12.4 A4.1 4.1 0 1 0 8.5 4.2 Z" fill="#d0d0d0"/><circle cx="8.5" cy="8.3" r="2.9" fill="none" stroke="#d0d0d0" stroke-width="1"/><circle cx="14.6" cy="4.6" r="0.7" fill="#333"/></svg>
<div class="b" style="left:1137px;top:71px;width:164px;height:26px;background:#1b1b1b;border:1px solid #585858;box-sizing:border-box;border-radius:3px;"></div>
<span class="t" style="left:1144.40px;top:80.00px;font-size:10.5px;line-height:10.5px;color:#e8e8e8;transform:scaleX(1.1082);">Material</span>
<svg class="b" style="left:1284.6px;top:80px;" width="11" height="8" viewBox="0 0 11 8"><path d="M1 1.4 L5.5 5.8 L10 1.4" fill="none" stroke="#d8d8d8" stroke-width="1.5"/></svg>
<svg class="b" style="left:394px;top:62px;" width="917" height="865" viewBox="394 62 917 865"><defs>
<radialGradient id="bg1" cx="838" cy="300" r="105" gradientUnits="userSpaceOnUse"><stop offset="0" stop-color="#ff1616"/><stop offset="0.45" stop-color="#f61212"/><stop offset="0.8" stop-color="#d80e0e"/><stop offset="1" stop-color="#b40a0a"/></radialGradient>
<radialGradient id="bg2" cx="832" cy="288" r="26" gradientUnits="userSpaceOnUse" gradientTransform="translate(832 287) scale(0.8 1.15) translate(-832 -287)"><stop offset="0" stop-color="#ffb4ac" stop-opacity="0.95"/><stop offset="0.22" stop-color="#ff948a" stop-opacity="0.8"/><stop offset="0.5" stop-color="#ff5a52" stop-opacity="0.5"/><stop offset="0.8" stop-color="#ff3a36" stop-opacity="0.18"/><stop offset="1" stop-color="#ff3030" stop-opacity="0"/></radialGradient>
<filter id="vb3" x="-150%" y="-50%" width="400%" height="200%"><feGaussianBlur stdDeviation="3"/></filter>
<filter id="vb1" x="-30%" y="-30%" width="160%" height="160%"><feGaussianBlur stdDeviation="0.6"/></filter>
<clipPath id="balc"><path d="M823 410 C806 402 754 366 754 304 C754 256 786 232 822 232 C866 232 890 252 890 304 C890 366 840 402 823 410 Z"/></clipPath>
</defs>
<path d="M823 410 C806 402 754 366 754 304 C754 256 786 232 822 232 C866 232 890 252 890 304 C890 366 840 402 823 410 Z" fill="url(#bg1)"/>
<g clip-path="url(#balc)">
<path d="M790 250 C778 270 776 300 782 330" fill="none" stroke="#ff4a44" stroke-opacity="0.45" stroke-width="9" filter="url(#vb3)"/>
<path d="M808 300 C804 330 808 356 818 380" fill="none" stroke="#ff3a34" stroke-opacity="0.35" stroke-width="10" filter="url(#vb3)"/>
<path d="M862 250 C876 268 882 290 880 316" fill="none" stroke="#ff3c38" stroke-opacity="0.5" stroke-width="5" filter="url(#vb3)"/>
<ellipse cx="832" cy="288" rx="22" ry="31" fill="url(#bg2)"/>
<path d="M754 304 C754 366 806 402 823 410" fill="none" stroke="#8a0606" stroke-opacity="0.55" stroke-width="7" filter="url(#vb3)"/><path d="M757 270 C752 290 752 320 758 345" fill="none" stroke="#7a0404" stroke-opacity="0.5" stroke-width="6" filter="url(#vb3)"/>
</g>
<path d="M820.4 410 L826.4 410 L829.6 418.4 L824 421.6 L819.2 419.4 Z" fill="#e41414"/>
<path d="M821.6 410.6 H825.6" stroke="#d8b0b0" stroke-width="1.2"/>
<path d="M822.9 421 C822.4 520 820.6 640 820 722" fill="none" stroke="#b4b4b4" stroke-width="1.1"/>
<path d="M820 722 L817.2 742 L814.6 760" fill="none" stroke="#a8a8a8" stroke-width="0.9"/>
<path d="M814.4 723 L822.2 722 L822.8 742 L820.6 766 L814.8 767.6 L815.2 745 Z" fill="#3c3ccc"/>
<path d="M818 723 L822.2 722 L822.8 742 L820.6 766 L818.6 766.6 Z" fill="#3030a8" opacity="0.6"/>
<g fill="none" stroke="#b8b8b8" stroke-width="0.9" filter="url(#vb1)">
<ellipse cx="828.6" cy="756.6" rx="19.4" ry="15.6" transform="rotate(-22 828.6 756.6)"/>
<ellipse cx="828" cy="756.2" rx="19" ry="14.4" transform="rotate(-26 828 756.2)"/>
<path d="M812 760 C808 752 812 744 818 741"/>
</g>
<path d="M820 722 L816.2 750" fill="none" stroke="#c8c8e8" stroke-width="0.8"/>
</svg>
<svg class="b" style="left:1240px;top:850px;" width="65" height="60" viewBox="0 0 65 60"><path d="M34 21.4 V40.4" stroke="#70e070" stroke-width="3.6" stroke-linecap="round"/>
<path d="M33.6 41 L18.2 43.6" stroke="#8484ea" stroke-width="2.6" stroke-linecap="round"/>
<path d="M34 40.8 L45 44.8" stroke="#e48484" stroke-width="2.4" stroke-linecap="round"/></svg>
<span class="t" style="left:1271.46px;top:860.00px;font-size:8px;line-height:8px;color:#58b858;transform:scaleX(0.9500);">Y</span>
<span class="t" style="left:1247.88px;top:892.00px;font-size:8px;line-height:8px;color:#6868a8;transform:scaleX(0.9500);">Z</span>
<span class="t" style="left:1287.86px;top:894.00px;font-size:8px;line-height:8px;color:#a86868;transform:scaleX(0.9500);">X</span>
<div class="b" style="left:394px;top:904px;width:59px;height:23px;background:#151515;"></div>
<svg class="b" style="left:398px;top:908.8px;" width="12.4" height="12.4" viewBox="0 0 12.4 12.4"><path fill-rule="evenodd" d="M0 0 H12.4 V12.4 H0 Z M6.2 2.2 A4 4 0 1 0 6.2 10.2 A4 4 0 1 0 6.2 2.2 Z" fill="#c8c8c8"/><circle cx="6.2" cy="6.2" r="4" fill="#202020"/></svg>
<span class="t" style="left:416.60px;top:911.00px;font-size:11px;line-height:11px;font-weight:700;color:#e0e0e0;transform:scaleX(0.9699);">MASK</span>
<div class="b" style="left:1313px;top:26px;width:75px;height:2px;background:#2f8cf0;"></div>
<div class="b" style="left:1388px;top:26px;width:231px;height:28px;background:#272727;"></div>
<span class="t" style="left:1320.00px;top:37.00px;font-size:11px;line-height:11px;font-weight:700;color:#ffffff;transform:scaleX(0.9012);">LAYERS</span>
<svg class="b" style="left:1368.4px;top:37.6px;" width="10" height="10" viewBox="0 0 10 10"><path d="M0.8 0.8 L9.2 9.2 M9.2 0.8 L0.8 9.2" stroke="#d8d8d8" stroke-width="1.1" fill="none"/></svg>
<span class="t" style="left:1395.20px;top:37.00px;font-size:11px;line-height:11px;font-weight:700;color:#e4e4e4;transform:scaleX(0.8830);">TEXTURE SET LIST</span>
<span class="t" style="left:1496.20px;top:37.00px;font-size:11px;line-height:11px;font-weight:700;color:#e4e4e4;transform:scaleX(0.8932);">TEXTURE SET SETTINGS</span>
<div class="b" style="left:1317px;top:59px;width:88px;height:26px;background:#2f2f2f;border:1px solid #4e4e4e;box-sizing:border-box;border-radius:3px;"></div>
<span class="t" style="left:1324.30px;top:68.00px;font-size:10.5px;line-height:10.5px;color:#e8e8e8;transform:scaleX(1.0620);">Base color</span>
<svg class="b" style="left:1388.4px;top:67.6px;" width="11" height="8" viewBox="0 0 11 8"><path d="M1 1.4 L5.5 5.8 L10 1.4" fill="none" stroke="#d0d0d0" stroke-width="1.4"/></svg>
<svg class="b" style="left:1687.5px;top:64px;" width="17" height="17" viewBox="0 0 17 17"><path d="M0.6 15.4 L1.8 16.6 L10.8 7.6 L9.6 6.4 Z" fill="#d0d0d0"/><path d="M11.8 0.6 V3.6 M11.8 7.4 V10 M7.2 5.2 H9.8 M13.8 5.2 H16.4 M8.6 2 L10.2 3.6 M15 2 L13.4 3.6 M15 8.4 L13.4 6.8" stroke="#d0d0d0" stroke-width="1"/><path d="M9.9 12.1 L12.9 15 L15.9 12.1" fill="none" stroke="#d0d0d0" stroke-width="1.4"/></svg>
<svg class="b" style="left:1715.6px;top:64.4px;" width="17" height="16" viewBox="0 0 17 16"><path fill-rule="evenodd" d="M0 0 H16.6 V8 H14 A5.6 5.6 0 1 0 8.6 13.4 V15.6 H0 Z" fill="#d0d0d0"/><path d="M12.6 8.6 A4 4 0 1 1 8.6 4.6" fill="none" stroke="#d0d0d0" stroke-width="0"/><path d="M9.9 10.7 L12.7 13.5 L15.6 10.7" fill="none" stroke="#d0d0d0" stroke-width="1.4"/><path d="M9.4 5.4 A3.4 3.4 0 1 0 12.2 9.6" fill="none" stroke="#333" stroke-width="0"/></svg>
<svg class="b" style="left:1744px;top:64.4px;overflow:visible;" width="16.0" height="16.0" viewBox="0 0 16 16"><path d="M0.18 15.69 Q3.51 15.39 5.27 13.47 L6.54 11.47 L4.03 8.89 L2.00 10.09 Q0.44 12.79 0.18 15.69 Z" fill="#d0d0d0"/><path d="M7.19 10.70 L15.53 1.92 Q15.34 0.44 13.86 0.20 L4.82 8.26 Z" fill="#d0d0d0"/></svg>
<svg class="b" style="left:1772px;top:64px;" width="17" height="17" viewBox="0 0 17 17"><path d="M6.4 0.8 L13.8 8.2 L7.4 14.6 L0.8 8 Z" fill="none" stroke="#d0d0d0" stroke-width="1.3"/><path d="M1.6 8.2 H13.2 L7.4 14 Z" fill="#d0d0d0"/><path d="M14.6 10.4 C15.6 12 16.4 13 16.4 14 A1.8 1.8 0 0 1 12.8 14 C12.8 13 13.6 12 14.6 10.4 Z" fill="#d0d0d0"/><path d="M12.4 14.8 L13.8 16.2 L15.6 14.6" fill="none" stroke="#d0d0d0" stroke-width="0"/></svg>
<svg class="b" style="left:1799px;top:64px;" width="18" height="17" viewBox="0 0 18 17"><path d="M8.4 0.4 A8 8 0 1 0 10.6 16 C9 14 9.4 11 12 10.2 C14.6 9.6 16 8.4 16.3 7 A8 8 0 0 0 8.4 0.4 Z" fill="#d0d0d0"/><path d="M5.2 1.2 C5.6 5 8.4 8 12.6 9" fill="none" stroke="#333" stroke-width="1.5"/><path d="M10.5 11.1 L13.3 13.9 L16.2 11.1" fill="none" stroke="#d0d0d0" stroke-width="1.4"/></svg>
<svg class="b" style="left:1827.4px;top:66px;" width="17" height="13.4" viewBox="0 0 17 13.4"><path d="M0 0.6 A0.6 0.6 0 0 1 0.6 0 H6.2 L8.2 2.4 H16.4 A0.6 0.6 0 0 1 17 3 V12.8 A0.6 0.6 0 0 1 16.4 13.4 H0.6 A0.6 0.6 0 0 1 0 12.8 Z" fill="#d0d0d0"/></svg>
<svg class="b" style="left:1856.4px;top:64px;" width="15" height="17" viewBox="0 0 15 17"><path d="M0 2.6 H15 V4.2 H0 Z M5 0.6 H10 V2.6 H5 Z" fill="#d0d0d0"/><path d="M1.6 5.2 H13.4 L12.8 16.4 H2.2 Z" fill="#d0d0d0"/><path d="M4.6 6.4 V15.2 M7.5 6.4 V15.2 M10.4 6.4 V15.2" stroke="#333" stroke-width="1.1"/></svg>
<div class="b" style="left:1313px;top:94px;width:569px;height:1px;background:#1f1f1f;"></div>
<svg class="b" style="left:1318.1px;top:109.0px;" width="16" height="12" viewBox="0 0 16 12"><path d="M0.7 6 C3.4 0.6 12.6 0.6 15.3 6 C12.6 11.4 3.4 11.4 0.7 6 Z" fill="none" stroke="#d0d0d0" stroke-width="1.4"/><circle cx="8" cy="5.8" r="3" fill="#d0d0d0"/><circle cx="7.8" cy="5.4" r="1.1" fill="#555"/><circle cx="7.5" cy="5" r="0.5" fill="#eee"/></svg>
<svg class="b" style="left:1339.8px;top:110.0px;" width="16.4" height="12" viewBox="0 0 16.4 12"><path d="M0 0.5 A0.5 0.5 0 0 1 0.5 0 H5.6 L7.6 2 H15.9 A0.5 0.5 0 0 1 16.4 2.5 V11.5 A0.5 0.5 0 0 1 15.9 12 H0.5 A0.5 0.5 0 0 1 0 11.5 Z" fill="#d0d0d0"/></svg>
<div class="b" style="left:1360.4px;top:101.19999999999999px;width:25.6px;height:25.5px;border:1px solid #4e4e4e;box-sizing:border-box;border-radius:3.5px;"></div>
<div class="b" style="left:1362.1px;top:102.89999999999999px;width:22.2px;height:22.2px;background-color:#3c3c3c;background-image:linear-gradient(45deg,#595959 25%,transparent 25%,transparent 75%,#595959 75%),linear-gradient(45deg,#595959 25%,transparent 25%,transparent 75%,#595959 75%);background-size:5.55px 5.55px;background-position:0 0,2.775px 2.775px;"></div>
<svg class="b" style="left:1395px;top:105.89999999999999px;" width="16.2" height="16.2" viewBox="0 0 16.2 16.2"><rect width="16.2" height="16.2" fill="#a4a4a4"/><circle cx="8.1" cy="8.1" r="5" fill="#2e2e2e"/></svg>
<div class="b" style="left:1362px;top:132.0px;width:22px;height:4.6px;background:#484848;"></div>
<div class="b" style="left:1392.2px;top:132.0px;width:22px;height:4.6px;background:#e87d1f;"></div>
<span class="t" style="left:1422.40px;top:114.00px;font-size:10.5px;line-height:10.5px;color:#e6e6e6;transform:scaleX(1.0952);">tape</span>
<div class="b" style="left:1807px;top:107.19999999999999px;width:22px;height:21.6px;border:1px dashed #5c5c5c;box-sizing:border-box;"></div>
<span class="t" style="left:1837.40px;top:103.00px;font-size:10.5px;line-height:10.5px;color:#e6e6e6;transform:scaleX(1.0556);">Norm</span>
<svg class="b" style="left:1866.6px;top:106.0px;" width="7" height="5" viewBox="0 0 7 5"><path d="M0.8 0.8 L3.5 3.6 L6.2 0.8" fill="none" stroke="#c8c8c8" stroke-width="1"/></svg>
<span class="t" style="left:1842.60px;top:125.00px;font-size:10.5px;line-height:10.5px;color:#e6e6e6;transform:scaleX(1.0039);">100</span>
<svg class="b" style="left:1866.6px;top:127.39999999999999px;" width="7" height="5" viewBox="0 0 7 5"><path d="M0.8 0.8 L3.5 3.6 L6.2 0.8" fill="none" stroke="#c8c8c8" stroke-width="1"/></svg>
<div class="b" style="left:1313px;top:141px;width:569px;height:1px;background:#1f1f1f;"></div>
<svg class="b" style="left:1318.1px;top:156.0px;" width="16" height="12" viewBox="0 0 16 12"><path d="M0.7 6 C3.4 0.6 12.6 0.6 15.3 6 C12.6 11.4 3.4 11.4 0.7 6 Z" fill="none" stroke="#d0d0d0" stroke-width="1.4"/><circle cx="8" cy="5.8" r="3" fill="#d0d0d0"/><circle cx="7.8" cy="5.4" r="1.1" fill="#555"/><circle cx="7.5" cy="5" r="0.5" fill="#eee"/></svg>
<svg class="b" style="left:1339.8px;top:157.0px;" width="16.4" height="12" viewBox="0 0 16.4 12"><path d="M0 0.5 A0.5 0.5 0 0 1 0.5 0 H5.6 L7.6 2 H15.9 A0.5 0.5 0 0 1 16.4 2.5 V11.5 A0.5 0.5 0 0 1 15.9 12 H0.5 A0.5 0.5 0 0 1 0 11.5 Z" fill="#d0d0d0"/></svg>
<div class="b" style="left:1360.4px;top:148.2px;width:25.6px;height:25.5px;border:1px solid #4e4e4e;box-sizing:border-box;border-radius:3.5px;"></div>
<div class="b" style="left:1362.1px;top:149.9px;width:22.2px;height:22.2px;background-color:#3c3c3c;background-image:linear-gradient(45deg,#595959 25%,transparent 25%,transparent 75%,#595959 75%),linear-gradient(45deg,#595959 25%,transparent 25%,transparent 75%,#595959 75%);background-size:5.55px 5.55px;background-position:0 0,2.775px 2.775px;"></div>
<svg class="b" style="left:1395px;top:152.9px;" width="16.2" height="16.2" viewBox="0 0 16.2 16.2"><rect width="16.2" height="16.2" fill="#a4a4a4"/><circle cx="8.1" cy="8.1" r="5" fill="#2e2e2e"/></svg>
<div class="b" style="left:1362px;top:179.0px;width:22px;height:4.6px;background:#484848;"></div>
<div class="b" style="left:1392.2px;top:179.0px;width:22px;height:4.6px;background:#e87d1f;"></div>
<span class="t" style="left:1422.40px;top:161.00px;font-size:10.5px;line-height:10.5px;color:#e6e6e6;transform:scaleX(1.0862);">cord</span>
<div class="b" style="left:1807px;top:154.2px;width:22px;height:21.6px;border:1px dashed #5c5c5c;box-sizing:border-box;"></div>
<span class="t" style="left:1837.40px;top:150.00px;font-size:10.5px;line-height:10.5px;color:#e6e6e6;transform:scaleX(1.0556);">Norm</span>
<svg class="b" style="left:1866.6px;top:153.0px;" width="7" height="5" viewBox="0 0 7 5"><path d="M0.8 0.8 L3.5 3.6 L6.2 0.8" fill="none" stroke="#c8c8c8" stroke-width="1"/></svg>
<span class="t" style="left:1842.60px;top:172.00px;font-size:10.5px;line-height:10.5px;color:#e6e6e6;transform:scaleX(1.0039);">100</span>
<svg class="b" style="left:1866.6px;top:174.39999999999998px;" width="7" height="5" viewBox="0 0 7 5"><path d="M0.8 0.8 L3.5 3.6 L6.2 0.8" fill="none" stroke="#c8c8c8" stroke-width="1"/></svg>
<div class="b" style="left:1313px;top:188px;width:569px;height:1px;background:#1f1f1f;"></div>
<svg class="b" style="left:1318.1px;top:203.20000000000002px;" width="16" height="12" viewBox="0 0 16 12"><path d="M0.7 6 C3.4 0.6 12.6 0.6 15.3 6 C12.6 11.4 3.4 11.4 0.7 6 Z" fill="none" stroke="#d0d0d0" stroke-width="1.4"/><circle cx="8" cy="5.8" r="3" fill="#d0d0d0"/><circle cx="7.8" cy="5.4" r="1.1" fill="#555"/><circle cx="7.5" cy="5" r="0.5" fill="#eee"/></svg>
<svg class="b" style="left:1339.8px;top:204.20000000000002px;" width="16.4" height="12" viewBox="0 0 16.4 12"><path d="M0 0.5 A0.5 0.5 0 0 1 0.5 0 H5.6 L7.6 2 H15.9 A0.5 0.5 0 0 1 16.4 2.5 V11.5 A0.5 0.5 0 0 1 15.9 12 H0.5 A0.5 0.5 0 0 1 0 11.5 Z" fill="#d0d0d0"/></svg>
<div class="b" style="left:1362.1px;top:197.10000000000002px;width:22.2px;height:22.2px;background-color:#3c3c3c;background-image:linear-gradient(45deg,#595959 25%,transparent 25%,transparent 75%,#595959 75%),linear-gradient(45deg,#595959 25%,transparent 25%,transparent 75%,#595959 75%);background-size:5.55px 5.55px;background-position:0 0,2.775px 2.775px;"></div>
<div class="b" style="left:1390px;top:195.4px;width:25.6px;height:25.5px;border:1px solid #4e4e4e;box-sizing:border-box;border-radius:3px;"></div>
<svg class="b" style="left:1395px;top:200.10000000000002px;" width="16.2" height="16.2" viewBox="0 0 16.2 16.2"><rect width="16.2" height="16.2" fill="#a4a4a4"/><circle cx="8.1" cy="8.1" r="5" fill="#2e2e2e"/></svg>
<div class="b" style="left:1362px;top:226.20000000000002px;width:22px;height:4.6px;background:#484848;"></div>
<div class="b" style="left:1392.2px;top:226.20000000000002px;width:22px;height:4.6px;background:#e87d1f;"></div>
<span class="t" style="left:1422.40px;top:208.00px;font-size:10.5px;line-height:10.5px;color:#e6e6e6;transform:scaleX(1.1523);">ballon</span>
<div class="b" style="left:1807px;top:201.4px;width:22px;height:21.6px;border:1px dashed #5c5c5c;box-sizing:border-box;"></div>
<span class="t" style="left:1837.40px;top:197.00px;font-size:10.5px;line-height:10.5px;color:#e6e6e6;transform:scaleX(1.0556);">Norm</span>
<svg class="b" style="left:1866.6px;top:200.20000000000002px;" width="7" height="5" viewBox="0 0 7 5"><path d="M0.8 0.8 L3.5 3.6 L6.2 0.8" fill="none" stroke="#c8c8c8" stroke-width="1"/></svg>
<span class="t" style="left:1842.60px;top:219.00px;font-size:10.5px;line-height:10.5px;color:#e6e6e6;transform:scaleX(1.0039);">100</span>
<svg class="b" style="left:1866.6px;top:221.60000000000002px;" width="7" height="5" viewBox="0 0 7 5"><path d="M0.8 0.8 L3.5 3.6 L6.2 0.8" fill="none" stroke="#c8c8c8" stroke-width="1"/></svg>
<div class="b" style="left:1388px;top:235px;width:493px;height:26px;background:#242424;border:1px solid #2f7fe0;box-sizing:border-box;"></div>
<svg class="b" style="left:1392.8px;top:242.2px;" width="16" height="12" viewBox="0 0 16 12"><path d="M0.7 6 C3.4 0.6 12.6 0.6 15.3 6 C12.6 11.4 3.4 11.4 0.7 6 Z" fill="none" stroke="#d0d0d0" stroke-width="1.4"/><circle cx="8" cy="5.8" r="3" fill="#d0d0d0"/><circle cx="7.8" cy="5.4" r="1.1" fill="#555"/><circle cx="7.5" cy="5" r="0.5" fill="#eee"/></svg>
<svg class="b" style="left:1416.4px;top:242.4px;overflow:visible;" width="11.52" height="11.52" viewBox="0 0 16 16"><path d="M0.18 15.69 Q3.51 15.39 5.27 13.47 L6.54 11.47 L4.03 8.89 L2.00 10.09 Q0.44 12.79 0.18 15.69 Z" fill="#d0d0d0"/><path d="M7.19 10.70 L15.53 1.92 Q15.34 0.44 13.86 0.20 L4.82 8.26 Z" fill="#d0d0d0"/></svg>
<span class="t" style="left:1438.40px;top:244.00px;font-size:10.5px;line-height:10.5px;color:#e6e6e6;transform:scaleX(1.0569);">Paint</span>
<span class="t" style="left:1784.10px;top:244.00px;font-size:10.5px;line-height:10.5px;color:#e6e6e6;transform:scaleX(1.0556);">Norm</span>
<svg class="b" style="left:1813.4px;top:246.4px;" width="7" height="5" viewBox="0 0 7 5"><path d="M0.8 0.8 L3.5 3.6 L6.2 0.8" fill="none" stroke="#c8c8c8" stroke-width="1"/></svg>
<span class="t" style="left:1828.00px;top:244.00px;font-size:10.5px;line-height:10.5px;color:#e6e6e6;transform:scaleX(1.0039);">100</span>
<svg class="b" style="left:1846.8px;top:246.4px;" width="7" height="5" viewBox="0 0 7 5"><path d="M0.8 0.8 L3.5 3.6 L6.2 0.8" fill="none" stroke="#c8c8c8" stroke-width="1"/></svg>
<svg class="b" style="left:1864px;top:244.2px;" width="7" height="7" viewBox="0 0 7 7"><path d="M0.6 0.6 L6.4 6.4 M6.4 0.6 L0.6 6.4" stroke="#d0d0d0" stroke-width="0.9"/></svg>
<div class="b" style="left:1313px;top:262px;width:569px;height:1px;background:#1f1f1f;"></div>
<div class="b" style="left:1314px;top:347px;width:568px;height:1px;background:#1f1f1f;"></div>
<div class="b" style="left:1313px;top:348px;width:569px;height:33px;background:#2f2f2f;"></div>
<span class="t" style="left:1320.00px;top:361.00px;font-size:11px;line-height:11px;font-weight:700;color:#e4e4e4;transform:scaleX(0.9300);">PROPERTIES - PAINT</span>
<svg class="b" style="left:1832px;top:360.8px;" width="8.4" height="8.4" viewBox="0 0 8.4 8.4"><rect x="0.5" y="0.5" width="7.4" height="7.4" fill="none" stroke="#b8b8b8" stroke-width="1"/><rect x="0.5" y="3.8" width="4" height="4.1" fill="#b8b8b8"/></svg>
<svg class="b" style="left:1861px;top:360px;" width="10" height="10" viewBox="0 0 10 10"><path d="M0.8 0.8 L9.2 9.2 M9.2 0.8 L0.8 9.2" stroke="#d8d8d8" stroke-width="1.1" fill="none"/></svg>
<div class="b" style="left:1313px;top:381px;width:569px;height:127.3px;background:#1a1a1a;"></div>
<span class="t" style="left:1684.30px;top:436.00px;font-size:11px;line-height:11px;color:#ececec;transform:scaleX(1.0382);">No material</span>
<svg class="b" style="left:1380px;top:392px;" width="150" height="116" viewBox="0 0 150 116"><defs><filter id="sb" x="-20%" y="-20%" width="140%" height="140%"><feGaussianBlur stdDeviation="2.2"/></filter><filter id="sb2" x="-20%" y="-20%" width="140%" height="140%"><feGaussianBlur stdDeviation="3.0"/></filter><filter id="sb3" x="-20%" y="-20%" width="140%" height="140%"><feGaussianBlur stdDeviation="3.8"/></filter></defs><g filter="url(#sb)" fill="#fff"><circle cx="14.3" cy="53.2" r="4.00"/><circle cx="15.0" cy="52.4" r="4.08"/><circle cx="15.8" cy="51.3" r="4.16"/><circle cx="16.9" cy="50.0" r="4.26"/><circle cx="18.0" cy="48.5" r="4.35"/><circle cx="19.3" cy="47.0" r="4.45"/><circle cx="20.5" cy="45.5" r="4.55"/><circle cx="21.8" cy="44.2" r="4.65"/><circle cx="23.0" cy="43.0" r="4.75"/><circle cx="24.2" cy="41.9" r="4.85"/><circle cx="25.4" cy="40.8" r="4.96"/><circle cx="26.7" cy="39.8" r="5.07"/><circle cx="28.0" cy="38.8" r="5.17"/><circle cx="29.2" cy="37.9" r="5.28"/><circle cx="30.5" cy="37.2" r="5.39"/><circle cx="31.8" cy="36.8" r="5.50"/><circle cx="33.0" cy="36.6" r="5.61"/><circle cx="34.2" cy="36.7" r="5.72"/><circle cx="35.4" cy="36.9" r="5.83"/><circle cx="36.5" cy="37.4" r="5.94"/><circle cx="37.7" cy="38.0" r="6.06"/><circle cx="38.8" cy="38.8" r="6.17"/><circle cx="40.0" cy="39.9" r="6.29"/><circle cx="41.2" cy="41.1" r="6.40"/><circle cx="42.5" cy="42.5" r="6.51"/><circle cx="43.8" cy="44.2" r="6.63"/><circle cx="45.1" cy="46.3" r="6.75"/><circle cx="46.5" cy="48.6" r="6.86"/><circle cx="47.8" cy="51.1" r="6.98"/><circle cx="49.2" cy="53.6" r="7.10"/><circle cx="50.6" cy="56.2" r="7.21"/><circle cx="52.1" cy="58.7" r="7.33"/></g><g filter="url(#sb2)" fill="#fff"><circle cx="53.5" cy="61.0" r="7.45"/><circle cx="55.0" cy="63.3" r="7.57"/><circle cx="56.5" cy="65.9" r="7.69"/><circle cx="58.0" cy="68.5" r="7.81"/><circle cx="59.6" cy="71.1" r="7.93"/><circle cx="61.1" cy="73.4" r="8.05"/><circle cx="62.6" cy="75.3" r="8.17"/><circle cx="64.1" cy="76.8" r="8.29"/><circle cx="65.6" cy="77.6" r="8.41"/><circle cx="67.0" cy="77.8" r="8.53"/><circle cx="68.4" cy="77.5" r="8.65"/><circle cx="69.8" cy="76.8" r="8.78"/><circle cx="71.1" cy="75.7" r="8.90"/><circle cx="72.5" cy="74.2" r="9.02"/><circle cx="73.8" cy="72.4" r="9.14"/><circle cx="75.2" cy="70.4" r="9.27"/><circle cx="76.5" cy="68.0" r="9.39"/><circle cx="77.8" cy="65.2" r="9.51"/><circle cx="79.1" cy="61.7" r="9.64"/><circle cx="80.4" cy="57.9" r="9.76"/><circle cx="81.7" cy="53.7" r="9.89"/><circle cx="83.0" cy="49.5" r="10.01"/><circle cx="84.3" cy="45.4" r="10.14"/><circle cx="85.6" cy="41.5" r="10.26"/><circle cx="87.0" cy="38.0" r="10.39"/><circle cx="88.4" cy="34.7" r="10.51"/><circle cx="89.8" cy="31.2" r="10.64"/><circle cx="91.2" cy="27.7" r="10.76"/><circle cx="92.7" cy="24.5" r="10.89"/><circle cx="94.1" cy="21.6" r="11.02"/></g><g filter="url(#sb3)" fill="#fff"><circle cx="95.6" cy="19.1" r="11.14"/><circle cx="97.0" cy="17.4" r="11.27"/><circle cx="98.5" cy="16.5" r="11.40"/><circle cx="100.0" cy="16.5" r="11.52"/><circle cx="101.5" cy="17.2" r="11.65"/><circle cx="103.1" cy="18.5" r="11.78"/><circle cx="104.6" cy="20.3" r="11.91"/><circle cx="106.2" cy="22.6" r="12.04"/><circle cx="107.7" cy="25.2" r="12.16"/><circle cx="109.1" cy="28.1" r="12.29"/><circle cx="110.5" cy="31.0" r="12.42"/><circle cx="111.8" cy="34.2" r="12.55"/><circle cx="113.1" cy="37.9" r="12.68"/><circle cx="114.3" cy="42.0" r="12.81"/><circle cx="115.4" cy="46.3" r="12.94"/><circle cx="116.6" cy="50.8" r="13.07"/><circle cx="117.7" cy="55.3" r="13.20"/><circle cx="118.9" cy="59.7" r="13.32"/><circle cx="120.0" cy="64.0" r="13.45"/><circle cx="121.2" cy="68.4" r="13.58"/><circle cx="122.5" cy="73.1" r="13.72"/><circle cx="123.8" cy="78.0" r="13.85"/><circle cx="125.1" cy="82.8" r="13.98"/><circle cx="126.3" cy="87.4" r="14.11"/><circle cx="127.4" cy="91.5" r="14.24"/><circle cx="128.3" cy="94.9" r="14.37"/><circle cx="129.0" cy="97.5" r="14.50"/></g></svg>
<div class="b" style="left:1313px;top:513px;width:34px;height:2px;background:#2f8cf0;"></div>
<div class="b" style="left:1346.3px;top:513px;width:102.7px;height:34px;background:#272727;"></div>
<div class="b" style="left:1313px;top:546px;width:570px;height:1px;background:#262626;"></div>
<svg class="b" style="left:1320px;top:520px;" width="22" height="22" viewBox="0 0 22 22"><path d="M2.4 13.9 C7.4 9.4 13 4.6 18.2 2.4 C15.6 6.4 13 10.4 11.2 13.6 C12.8 12.4 14.4 11.6 16 10.8 C14.8 13.2 13.9 15.8 13.4 18.6 L11.6 18.6 C11.9 16.6 12.4 14.8 13 13.4 C11.2 14.6 9.4 16 7.6 17.6 C8.6 13.6 11.2 9.4 14 6 C10.2 8.4 6.4 11.4 2.9 14.4 Z" fill="#cccccc" stroke="#cccccc" stroke-width="0.5" stroke-linejoin="round"/></svg>
<svg class="b" style="left:1355.1px;top:521px;" width="18" height="18" viewBox="0 0 18 18"><defs><clipPath id="ckc2"><circle cx="9" cy="9" r="6.9"/></clipPath></defs><circle cx="9" cy="9" r="8" fill="#e8e8e8"/><g clip-path="url(#ckc2)"><rect x="-2" y="-2" width="2" height="2" fill="#121212"/><rect x="-2" y="2" width="2" height="2" fill="#121212"/><rect x="-2" y="6" width="2" height="2" fill="#121212"/><rect x="-2" y="10" width="2" height="2" fill="#121212"/><rect x="-2" y="14" width="2" height="2" fill="#121212"/><rect x="-2" y="18" width="2" height="2" fill="#121212"/><rect x="0" y="0" width="2" height="2" fill="#121212"/><rect x="0" y="4" width="2" height="2" fill="#121212"/><rect x="0" y="8" width="2" height="2" fill="#121212"/><rect x="0" y="12" width="2" height="2" fill="#121212"/><rect x="0" y="16" width="2" height="2" fill="#121212"/><rect x="2" y="-2" width="2" height="2" fill="#121212"/><rect x="2" y="2" width="2" height="2" fill="#121212"/><rect x="2" y="6" width="2" height="2" fill="#121212"/><rect x="2" y="10" width="2" height="2" fill="#121212"/><rect x="2" y="14" width="2" height="2" fill="#121212"/><rect x="2" y="18" width="2" height="2" fill="#121212"/><rect x="4" y="0" width="2" height="2" fill="#121212"/><rect x="4" y="4" width="2" height="2" fill="#121212"/><rect x="4" y="8" width="2" height="2" fill="#121212"/><rect x="4" y="12" width="2" height="2" fill="#121212"/><rect x="4" y="16" width="2" height="2" fill="#121212"/><rect x="6" y="-2" width="2" height="2" fill="#121212"/><rect x="6" y="2" width="2" height="2" fill="#121212"/><rect x="6" y="6" width="2" height="2" fill="#121212"/><rect x="6" y="10" width="2" height="2" fill="#121212"/><rect x="6" y="14" width="2" height="2" fill="#121212"/><rect x="6" y="18" width="2" height="2" fill="#121212"/><rect x="8" y="0" width="2" height="2" fill="#121212"/><rect x="8" y="4" width="2" height="2" fill="#121212"/><rect x="8" y="8" width="2" height="2" fill="#121212"/><rect x="8" y="12" width="2" height="2" fill="#121212"/><rect x="8" y="16" width="2" height="2" fill="#121212"/><rect x="10" y="-2" width="2" height="2" fill="#121212"/><rect x="10" y="2" width="2" height="2" fill="#121212"/><rect x="10" y="6" width="2" height="2" fill="#121212"/><rect x="10" y="10" width="2" height="2" fill="#121212"/><rect x="10" y="14" width="2" height="2" fill="#121212"/><rect x="10" y="18" width="2" height="2" fill="#121212"/><rect x="12" y="0" width="2" height="2" fill="#121212"/><rect x="12" y="4" width="2" height="2" fill="#121212"/><rect x="12" y="8" width="2" height="2" fill="#121212"/><rect x="12" y="12" width="2" height="2" fill="#121212"/><rect x="12" y="16" width="2" height="2" fill="#121212"/><rect x="14" y="-2" width="2" height="2" fill="#121212"/><rect x="14" y="2" width="2" height="2" fill="#121212"/><rect x="14" y="6" width="2" height="2" fill="#121212"/><rect x="14" y="10" width="2" height="2" fill="#121212"/><rect x="14" y="14" width="2" height="2" fill="#121212"/><rect x="14" y="18" width="2" height="2" fill="#121212"/><rect x="16" y="0" width="2" height="2" fill="#121212"/><rect x="16" y="4" width="2" height="2" fill="#121212"/><rect x="16" y="8" width="2" height="2" fill="#121212"/><rect x="16" y="12" width="2" height="2" fill="#121212"/><rect x="16" y="16" width="2" height="2" fill="#121212"/><rect x="18" y="-2" width="2" height="2" fill="#121212"/><rect x="18" y="2" width="2" height="2" fill="#121212"/><rect x="18" y="6" width="2" height="2" fill="#121212"/><rect x="18" y="10" width="2" height="2" fill="#121212"/><rect x="18" y="14" width="2" height="2" fill="#121212"/><rect x="18" y="18" width="2" height="2" fill="#121212"/></g></svg>
<svg class="b" style="left:1389.9px;top:522.1px;" width="16.2" height="16.2" viewBox="0 0 16.2 16.2"><rect x="0.6" y="0.6" width="15" height="15" fill="#262626" stroke="#d8d8d8" stroke-width="1.2"/><circle cx="8" cy="7.9" r="4.1" fill="#d0d0d0"/></svg>
<svg class="b" style="left:1423.9px;top:522.1px;" width="16.2" height="16.2" viewBox="0 0 16.2 16.2"><defs><linearGradient id="gsq" x1="0" x2="1" y1="0" y2="0"><stop offset="0.05" stop-color="#f4f4f4"/><stop offset="0.85" stop-color="#0c0c0c"/></linearGradient></defs><rect x="0.6" y="0.6" width="15" height="15" fill="url(#gsq)" stroke="#d4d4d4" stroke-width="1.2"/></svg>
<div class="b" style="left:1870px;top:547px;width:12px;height:388px;background:#272727;"></div>
<div class="b" style="left:1871px;top:548px;width:10px;height:73.6px;background:#424242;"></div>
<span class="t" style="left:1330.40px;top:574.00px;font-size:11px;line-height:11px;font-weight:700;color:#e8e8e8;transform:scaleX(0.9030);">BRUSH</span>
<svg class="b" style="left:1832.6px;top:573px;" width="13" height="13" viewBox="0 0 13 13"><path d="M0 1 H12.4 M0 4.6 H12.4 M0 8.2 H6" stroke="#d0d0d0" stroke-width="1.3"/><path d="M7.6 9 L9.9 11.4 L12.2 9" fill="none" stroke="#d0d0d0" stroke-width="1.1"/></svg>
<svg class="b" style="left:1331.4px;top:611.0px;" width="9" height="6" viewBox="0 0 9 6"><path d="M0.8 0.8 L4.5 4.6 L8.2 0.8" fill="none" stroke="#c8c8c8" stroke-width="1.1"/></svg>
<span class="t" style="left:1345.90px;top:610.00px;font-size:11px;line-height:11px;font-weight:700;color:#eaeaea;transform:scaleX(0.9260);">Size</span>
<svg class="b" style="left:1838.6px;top:607.6px;" width="13" height="13" viewBox="0 0 13 13"><g fill="none" stroke="#c4c4c4" stroke-width="0.9"><path d="M2.6 4 A5 5 0 1 1 1.6 7"/><path d="M4.6 4.6 L8.6 8.6 M8.6 4.6 L4.6 8.6"/><path d="M0.8 2.4 L2.4 4.6 L4.8 3.2"/></g></svg>
<span class="t" style="left:1345.20px;top:631.00px;font-size:10.5px;line-height:10.5px;color:#e0e0e0;transform:scaleX(0.9598);">Size</span>
<span class="t" style="left:1799.90px;top:631.00px;font-size:10.5px;line-height:10.5px;color:#e0e0e0;transform:scaleX(0.9583);">10</span>
<div class="b" style="left:1345.2px;top:652.0px;width:469.20000000000005px;height:2px;background:#4e4e4e;border-radius:1px;"></div>
<div class="b" style="left:1345.2px;top:652.0px;width:134.0px;height:2px;background:#d8d8d8;border-radius:1px;"></div>
<svg class="b" style="left:1478.9px;top:646.0px;" width="14" height="14" viewBox="0 0 14 14"><circle cx="7" cy="7" r="5.2" fill="#333" stroke="#d8d8d8" stroke-width="1.6"/></svg>
<div class="b" style="left:1825px;top:629px;width:28px;height:28px;background:#4d4d4d;border-radius:3px;"></div>
<svg class="b" style="left:1832.6px;top:637.4px;" width="12" height="12" viewBox="0 0 12 12"><circle cx="4.2" cy="7.9" r="3" fill="#d0d0d0"/><path d="M11.3 0.6 L6.45 10.0 L2.0 5.75 Z" fill="#d0d0d0"/></svg>
<span class="t" style="left:1345.20px;top:672.00px;font-size:10.5px;line-height:10.5px;color:#e0e0e0;transform:scaleX(1.0352);">Minimum Size (%)</span>
<span class="t" style="left:1843.70px;top:672.00px;font-size:10.5px;line-height:10.5px;color:#e0e0e0;transform:scaleX(0.8900);">5</span>
<div class="b" style="left:1345.2px;top:692.8000000000001px;width:507.79999999999995px;height:2px;background:#4e4e4e;border-radius:1px;"></div>
<div class="b" style="left:1345.2px;top:692.8000000000001px;width:25.899999999999864px;height:2px;background:#d8d8d8;border-radius:1px;"></div>
<svg class="b" style="left:1370.8px;top:686.8000000000001px;" width="14" height="14" viewBox="0 0 14 14"><circle cx="7" cy="7" r="5.2" fill="#333" stroke="#d8d8d8" stroke-width="1.6"/></svg>
<span class="t" style="left:1345.20px;top:713.00px;font-size:10.5px;line-height:10.5px;color:#e0e0e0;transform:scaleX(1.0750);">Spacing</span>
<span class="t" style="left:1836.80px;top:713.00px;font-size:10.5px;line-height:10.5px;color:#e0e0e0;transform:scaleX(1.0353);">20</span>
<div class="b" style="left:1345.2px;top:733.6px;width:507.79999999999995px;height:2px;background:#4e4e4e;border-radius:1px;"></div>
<div class="b" style="left:1345.2px;top:733.6px;width:20.0px;height:2px;background:#d8d8d8;border-radius:1px;"></div>
<svg class="b" style="left:1364.9px;top:727.6px;" width="14" height="14" viewBox="0 0 14 14"><circle cx="7" cy="7" r="5.2" fill="#333" stroke="#d8d8d8" stroke-width="1.6"/></svg>
<svg class="b" style="left:1331.4px;top:762.1px;" width="9" height="6" viewBox="0 0 9 6"><path d="M0.8 0.8 L4.5 4.6 L8.2 0.8" fill="none" stroke="#c8c8c8" stroke-width="1.1"/></svg>
<span class="t" style="left:1345.90px;top:761.00px;font-size:11px;line-height:11px;font-weight:700;color:#eaeaea;transform:scaleX(0.9635);">Opacity</span>
<svg class="b" style="left:1838.6px;top:758.7px;" width="13" height="13" viewBox="0 0 13 13"><g fill="none" stroke="#c4c4c4" stroke-width="0.9"><path d="M2.6 4 A5 5 0 1 1 1.6 7"/><path d="M4.6 4.6 L8.6 8.6 M8.6 4.6 L4.6 8.6"/><path d="M0.8 2.4 L2.4 4.6 L4.8 3.2"/></g></svg>
<span class="t" style="left:1345.20px;top:782.00px;font-size:10.5px;line-height:10.5px;color:#e0e0e0;transform:scaleX(1.1058);">Flow</span>
<span class="t" style="left:1793.20px;top:782.00px;font-size:10.5px;line-height:10.5px;color:#e0e0e0;transform:scaleX(1.0210);">100</span>
<div class="b" style="left:1345.2px;top:803.1px;width:469.20000000000005px;height:2px;background:#4e4e4e;border-radius:1px;"></div>
<div class="b" style="left:1345.2px;top:803.1px;width:454.79999999999995px;height:2px;background:#d8d8d8;border-radius:1px;"></div>
<svg class="b" style="left:1799.7px;top:797.1px;" width="14" height="14" viewBox="0 0 14 14"><circle cx="7" cy="7" r="5.2" fill="#333" stroke="#d8d8d8" stroke-width="1.6"/></svg>
<svg class="b" style="left:1832.6px;top:788.6px;" width="12" height="12" viewBox="0 0 12 12"><circle cx="4.2" cy="7.9" r="3" fill="#d0d0d0"/><path d="M11.3 0.6 L6.45 10.0 L2.0 5.75 Z" fill="#d0d0d0"/></svg>
<span class="t" style="left:1345.20px;top:823.00px;font-size:10.5px;line-height:10.5px;color:#676767;transform:scaleX(1.0732);">Minimum Flow (%)</span>
<span class="t" style="left:1843.70px;top:823.00px;font-size:10.5px;line-height:10.5px;color:#676767;transform:scaleX(0.8900);">5</span>
<div class="b" style="left:1345.2px;top:843.9px;width:507.79999999999995px;height:2px;background:#444;border-radius:1px;"></div>
<div class="b" style="left:1345.2px;top:843.9px;width:25.899999999999864px;height:2px;background:#5a5a5a;border-radius:1px;"></div>
<svg class="b" style="left:1370.8px;top:837.9px;" width="14" height="14" viewBox="0 0 14 14"><circle cx="7" cy="7" r="5.2" fill="#333" stroke="#5a5a5a" stroke-width="1.6"/></svg>
<span class="t" style="left:1345.20px;top:864.00px;font-size:10.5px;line-height:10.5px;color:#e0e0e0;transform:scaleX(1.0907);">Stroke opacity</span>
<span class="t" style="left:1831.00px;top:864.00px;font-size:10.5px;line-height:10.5px;color:#e0e0e0;transform:scaleX(1.0210);">100</span>
<div class="b" style="left:1345.2px;top:884.7px;width:507.79999999999995px;height:2px;background:#4e4e4e;border-radius:1px;"></div>
<div class="b" style="left:1345.2px;top:884.7px;width:492.89999999999986px;height:2px;background:#d8d8d8;border-radius:1px;"></div>
<svg class="b" style="left:1837.8px;top:878.7px;" width="14" height="14" viewBox="0 0 14 14"><circle cx="7" cy="7" r="5.2" fill="#333" stroke="#d8d8d8" stroke-width="1.6"/></svg>
<svg class="b" style="left:1331.4px;top:913.2px;" width="9" height="6" viewBox="0 0 9 6"><path d="M0.8 0.8 L4.5 4.6 L8.2 0.8" fill="none" stroke="#c8c8c8" stroke-width="1.1"/></svg>
<span class="t" style="left:1345.90px;top:912.00px;font-size:11px;line-height:11px;font-weight:700;color:#eaeaea;transform:scaleX(1.0036);">Orientation</span>
<svg class="b" style="left:1838.6px;top:909.8000000000001px;" width="13" height="13" viewBox="0 0 13 13"><g fill="none" stroke="#c4c4c4" stroke-width="0.9"><path d="M2.6 4 A5 5 0 1 1 1.6 7"/><path d="M4.6 4.6 L8.6 8.6 M8.6 4.6 L4.6 8.6"/><path d="M0.8 2.4 L2.4 4.6 L4.8 3.2"/></g></svg>
</body></html>
